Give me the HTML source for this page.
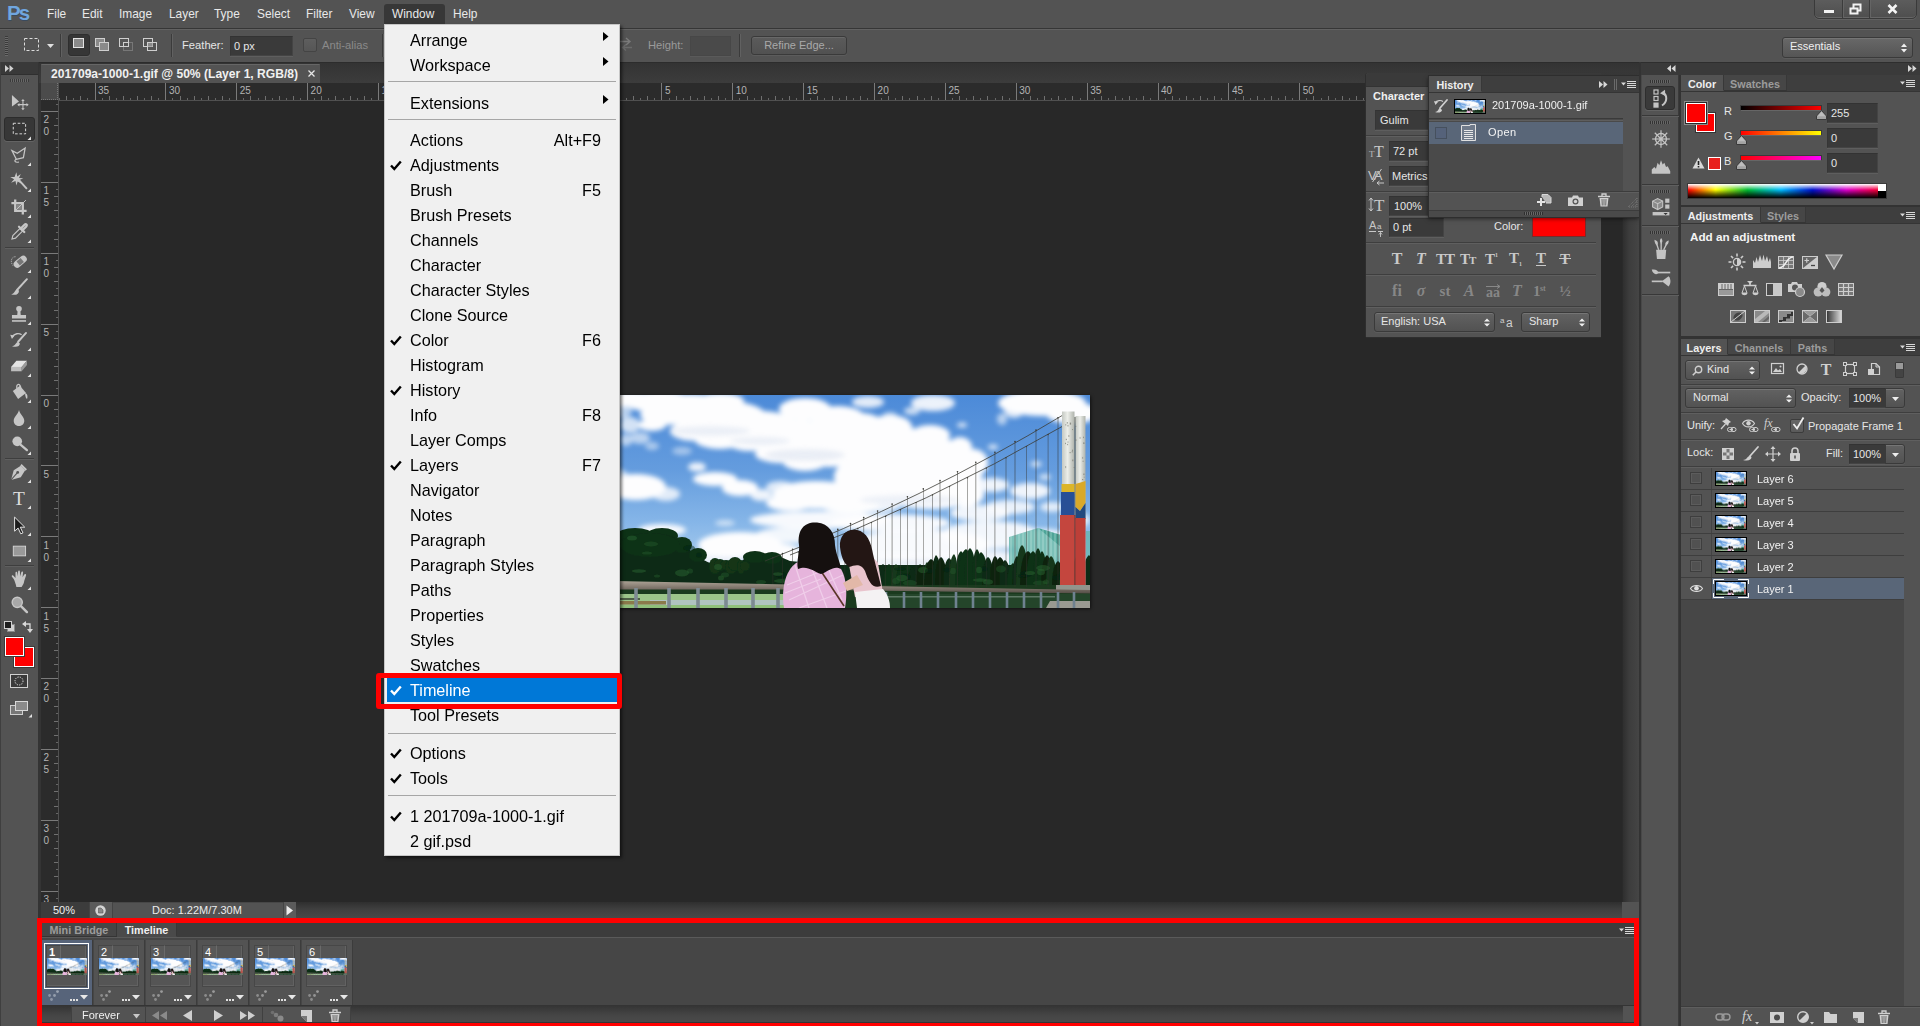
<!DOCTYPE html>
<html lang="en"><head><meta charset="utf-8"><title>Photoshop - Window menu Timeline</title>
<style>
*{box-sizing:border-box;margin:0;padding:0}
html,body{width:1920px;height:1026px;overflow:hidden;background:#535353}
body{font-family:"Liberation Sans",sans-serif;font-size:11px;color:#e6e6e6;position:relative;cursor:default}
.a{position:absolute}
.t{position:absolute;white-space:nowrap;line-height:14px}
.b{font-weight:bold}
.dim{color:#8e8e8e}
svg{position:absolute;overflow:visible}
#menubar{left:0;top:0;width:1920px;height:28px;background:#535353}
#optbar{left:0;top:28px;width:1920px;height:34px;background:#535353;border-top:1px solid #363636;box-shadow:inset 0 1px 0 #626262}
.mi{position:absolute;top:7px;font-size:11.9px;line-height:15px;color:#e9e9e9;white-space:nowrap}
.fld{position:absolute;background:#3a3a3a;border:1px solid #444;border-top-color:#333;border-left-color:#363636;box-shadow:0 1px 0 #5e5e5e}
.btn{position:absolute;border:1px solid #3a3a3a;border-radius:3px;background:linear-gradient(#626262,#525252);box-shadow:inset 0 1px 0 #757575,0 1px 0 #5c5c5c}
.tabstrip{position:absolute;background:#3e3e3e;border-bottom:1px solid #353535}
.tab{position:absolute;top:0;height:100%;font-weight:bold;font-size:10.8px;line-height:15px;padding-top:2px;text-align:center;color:#9c9c9c;background:#464646;border-right:1px solid #383838;border-bottom:1px solid #353535;white-space:nowrap}
.tab.on{color:#efefef;background:#535353;border-bottom:1px solid #535353;border-right:1px solid #383838}
.panel{position:absolute;background:#535353}
.dock svg{transform:scale(.84);transform-origin:50% 50%}
.dock svg.ns{transform:none}
.sepv{position:absolute;width:1px;background:#3b3b3b;box-shadow:1px 0 0 #616161}
.seph{position:absolute;height:1px;background:#3e3e3e;box-shadow:0 1px 0 #5f5f5f}
</style></head>
<body>
<svg class="a" width="0" height="0" style="left:0;top:0"><defs><linearGradient id="sky" x1="0" y1="0" x2="0" y2="1"><stop offset="0" stop-color="#4c8ad8"/><stop offset="0.35" stop-color="#649cde"/><stop offset="0.6" stop-color="#86b6e8"/><stop offset="0.85" stop-color="#b3d2f0"/><stop offset="1" stop-color="#cfe2f5"/></linearGradient><filter id="cb" x="-10%" y="-10%" width="120%" height="120%"><feGaussianBlur stdDeviation="2.6"/></filter><filter id="cb2" x="-10%" y="-10%" width="120%" height="120%"><feGaussianBlur stdDeviation="1.4"/></filter><filter id="tb" x="-5%" y="-5%" width="110%" height="110%"><feGaussianBlur stdDeviation="0.6"/></filter><linearGradient id="tw" x1="0" y1="0" x2="1" y2="0"><stop offset="0" stop-color="#c4c8c2"/><stop offset="0.45" stop-color="#eceee9"/><stop offset="1" stop-color="#aeb2ab"/></linearGradient><linearGradient id="rail" x1="0" y1="0" x2="0" y2="1"><stop offset="0" stop-color="#b0a699"/><stop offset="0.4" stop-color="#8d8378"/><stop offset="1" stop-color="#544d46"/></linearGradient><symbol id="photo" viewBox="0 0 500 213" preserveAspectRatio="none"><rect width="500" height="213" fill="url(#sky)"/><g filter="url(#cb)"><ellipse cx="40" cy="4" rx="25" ry="8" fill="#fdfdfe"/><ellipse cx="70" cy="7" rx="34" ry="11" fill="#fdfdfe"/><ellipse cx="100" cy="13" rx="42" ry="14" fill="#fdfdfe"/><ellipse cx="135" cy="22" rx="42" ry="16" fill="#fdfdfe"/><ellipse cx="130" cy="6" rx="24" ry="8" fill="#fdfdfe"/><ellipse cx="170" cy="32" rx="40" ry="16" fill="#fdfdfe"/><ellipse cx="205" cy="42" rx="38" ry="18" fill="#fdfdfe"/><ellipse cx="215" cy="14" rx="26" ry="11" fill="#fdfdfe"/><ellipse cx="248" cy="24" rx="28" ry="13" fill="#fdfdfe"/><ellipse cx="240" cy="50" rx="35" ry="22" fill="#fdfdfe"/><ellipse cx="272" cy="44" rx="30" ry="26" fill="#fdfdfe"/><ellipse cx="300" cy="56" rx="40" ry="28" fill="#fdfdfe"/><ellipse cx="330" cy="66" rx="42" ry="30" fill="#fdfdfe"/><ellipse cx="356" cy="82" rx="36" ry="26" fill="#fdfdfe"/><ellipse cx="312" cy="86" rx="50" ry="24" fill="#fdfdfe"/><ellipse cx="280" cy="82" rx="36" ry="22" fill="#fdfdfe"/><ellipse cx="374" cy="99" rx="20" ry="13" fill="#fdfdfe"/><ellipse cx="340" cy="101" rx="45" ry="13" fill="#fdfdfe"/><ellipse cx="300" cy="32" rx="22" ry="12" fill="#fdfdfe"/><ellipse cx="340" cy="40" rx="20" ry="10" fill="#fdfdfe"/><ellipse cx="105" cy="36" rx="25" ry="10" fill="#fdfdfe"/><ellipse cx="130" cy="45" rx="25" ry="9" fill="#fdfdfe"/><ellipse cx="160" cy="48" rx="22" ry="8" fill="#fdfdfe"/><ellipse cx="190" cy="59" rx="25" ry="9" fill="#fdfdfe"/><ellipse cx="215" cy="67" rx="22" ry="9" fill="#fdfdfe"/><ellipse cx="383" cy="68" rx="15" ry="14" fill="#fdfdfe"/><ellipse cx="370" cy="52" rx="12" ry="10" fill="#fdfdfe"/><ellipse cx="78" cy="20" rx="28" ry="10" fill="#fdfdfe"/><ellipse cx="62" cy="30" rx="14" ry="6" fill="#fdfdfe"/><ellipse cx="278" cy="7" rx="16" ry="6" fill="#fdfdfe" opacity="0.85"/><ellipse cx="343" cy="8" rx="22" ry="8" fill="#fdfdfe" opacity="0.9"/><ellipse cx="322" cy="16" rx="8" ry="4" fill="#fdfdfe" opacity="0.7"/><ellipse cx="300" cy="20" rx="7" ry="3" fill="#fdfdfe" opacity="0.6"/><ellipse cx="372" cy="30" rx="5" ry="2.5" fill="#fdfdfe" opacity="0.8"/><ellipse cx="403" cy="52" rx="5" ry="2.5" fill="#fdfdfe" opacity="0.8"/><ellipse cx="446" cy="69" rx="6" ry="3" fill="#fdfdfe" opacity="0.7"/><ellipse cx="455" cy="82" rx="6" ry="3" fill="#fdfdfe" opacity="0.7"/><ellipse cx="452" cy="8" rx="44" ry="13" fill="#fdfdfe"/><ellipse cx="482" cy="18" rx="26" ry="11" fill="#fdfdfe"/><ellipse cx="424" cy="15" rx="10" ry="8" fill="#fdfdfe" opacity="0.8"/><ellipse cx="412" cy="24" rx="5" ry="6" fill="#fdfdfe" opacity="0.6"/><ellipse cx="40" cy="30" rx="10" ry="8" fill="#fdfdfe" opacity="0.75"/><ellipse cx="33" cy="14" rx="9" ry="10" fill="#fdfdfe" opacity="0.6"/><ellipse cx="50" cy="43" rx="10" ry="6" fill="#fdfdfe" opacity="0.6"/><ellipse cx="36" cy="45" rx="6" ry="6" fill="#fdfdfe" opacity="0.6"/><ellipse cx="62" cy="51" rx="7" ry="4" fill="#fdfdfe" opacity="0.5"/><ellipse cx="92" cy="56" rx="10" ry="4" fill="#fdfdfe" opacity="0.45"/><ellipse cx="46" cy="92" rx="30" ry="13" fill="#fdfdfe"/><ellipse cx="26" cy="80" rx="12" ry="6" fill="#fdfdfe" opacity="0.6"/><ellipse cx="76" cy="99" rx="14" ry="7" fill="#fdfdfe" opacity="0.8"/><ellipse cx="107" cy="72" rx="9" ry="4.5" fill="#fdfdfe" opacity="0.9"/><ellipse cx="125" cy="84" rx="22" ry="7" fill="#fdfdfe"/><ellipse cx="150" cy="93" rx="18" ry="8" fill="#fdfdfe"/><ellipse cx="171" cy="100" rx="11" ry="6" fill="#fdfdfe" opacity="0.9"/><ellipse cx="226" cy="100" rx="44" ry="14" fill="#fdfdfe"/><ellipse cx="200" cy="108" rx="24" ry="8" fill="#fdfdfe"/><ellipse cx="262" cy="106" rx="30" ry="12" fill="#fdfdfe"/><ellipse cx="190" cy="92" rx="14" ry="6" fill="#fdfdfe" opacity="0.8"/><ellipse cx="402" cy="90" rx="17" ry="7" fill="#fdfdfe" opacity="0.9"/><ellipse cx="440" cy="96" rx="20" ry="8" fill="#fdfdfe" opacity="0.9"/><ellipse cx="462" cy="112" rx="12" ry="5" fill="#fdfdfe" opacity="0.8"/><ellipse cx="420" cy="112" rx="25" ry="7" fill="#fdfdfe" opacity="0.85"/><ellipse cx="390" cy="118" rx="30" ry="8" fill="#fdfdfe" opacity="0.9"/><ellipse cx="72" cy="135" rx="24" ry="6" fill="#fdfdfe" opacity="0.95"/><ellipse cx="60" cy="140" rx="14" ry="4" fill="#fdfdfe" opacity="0.8"/><ellipse cx="150" cy="150" rx="42" ry="13" fill="#fdfdfe"/><ellipse cx="185" cy="160" rx="30" ry="12" fill="#fdfdfe"/><ellipse cx="130" cy="162" rx="25" ry="8" fill="#fdfdfe" opacity="0.9"/><ellipse cx="230" cy="125" rx="70" ry="9" fill="#fdfdfe" opacity="0.95"/><ellipse cx="300" cy="128" rx="60" ry="9" fill="#fdfdfe" opacity="0.95"/><ellipse cx="270" cy="112" rx="40" ry="6" fill="#fdfdfe" opacity="0.9"/><ellipse cx="330" cy="150" rx="70" ry="16" fill="#fdfdfe" opacity="0.95"/><ellipse cx="400" cy="140" rx="50" ry="14" fill="#fdfdfe" opacity="0.9"/><ellipse cx="300" cy="170" rx="60" ry="10" fill="#fdfdfe" opacity="0.9"/><ellipse cx="390" cy="165" rx="50" ry="10" fill="#fdfdfe" opacity="0.85"/><ellipse cx="455" cy="150" rx="30" ry="16" fill="#fdfdfe" opacity="0.85"/><ellipse cx="485" cy="125" rx="15" ry="8" fill="#fdfdfe" opacity="0.8"/><ellipse cx="205" cy="140" rx="40" ry="8" fill="#fdfdfe" opacity="0.9"/><ellipse cx="135" cy="128" rx="10" ry="3" fill="#fdfdfe" opacity="0.6"/></g><g filter="url(#cb)" opacity="0.25"><ellipse cx="215" cy="60" rx="40" ry="6" fill="#b4c4de"/><ellipse cx="120" cy="36" rx="40" ry="5" fill="#b9c9e2"/><ellipse cx="320" cy="105" rx="50" ry="5" fill="#c0cfe6"/><ellipse cx="170" cy="46" rx="30" ry="4" fill="#b9c9e2"/><ellipse cx="150" cy="166" rx="40" ry="4" fill="#c5d3ea"/><ellipse cx="350" cy="168" rx="60" ry="4" fill="#c5d3ea"/></g><g filter="url(#tb)"><path d="M419 142 L448 133 L471 140 L471 172 L419 172 Z" fill="#5fb3a8" opacity="0.8"/><rect x="496" y="136" width="4" height="36" fill="#5fb3a8" opacity=".7"/><path d="M448 133 L471 152 L471 140 Z" fill="#2f9384" opacity=".6"/><line x1="421" y1="141" x2="421" y2="172" stroke="#c4e6e0" stroke-width="0.7" opacity=".8"/><line x1="425" y1="140" x2="425" y2="172" stroke="#c4e6e0" stroke-width="0.7" opacity=".8"/><line x1="429" y1="139" x2="429" y2="172" stroke="#c4e6e0" stroke-width="0.7" opacity=".8"/><line x1="433" y1="138" x2="433" y2="172" stroke="#c4e6e0" stroke-width="0.7" opacity=".8"/><line x1="437" y1="137" x2="437" y2="172" stroke="#c4e6e0" stroke-width="0.7" opacity=".8"/><line x1="441" y1="135" x2="441" y2="172" stroke="#c4e6e0" stroke-width="0.7" opacity=".8"/><line x1="445" y1="134" x2="445" y2="172" stroke="#c4e6e0" stroke-width="0.7" opacity=".8"/><line x1="449" y1="133" x2="449" y2="172" stroke="#c4e6e0" stroke-width="0.7" opacity=".8"/><line x1="453" y1="134" x2="453" y2="172" stroke="#c4e6e0" stroke-width="0.7" opacity=".8"/><line x1="457" y1="136" x2="457" y2="172" stroke="#c4e6e0" stroke-width="0.7" opacity=".8"/><line x1="461" y1="137" x2="461" y2="172" stroke="#c4e6e0" stroke-width="0.7" opacity=".8"/><line x1="465" y1="138" x2="465" y2="172" stroke="#c4e6e0" stroke-width="0.7" opacity=".8"/><line x1="469" y1="139" x2="469" y2="172" stroke="#c4e6e0" stroke-width="0.7" opacity=".8"/></g><g filter="url(#tb)"><path d="M0 150 C8 141 22 136 42 137 C60 134 84 141 96 152 C106 160 112 165 120 168 L150 168 C158 158 175 157 186 160 L200 166 L240 170 L500 170 L500 200 L0 200 Z" fill="#0e2c14"/><ellipse cx="20" cy="146" rx="16" ry="9" fill="#103016"/><ellipse cx="45" cy="140" rx="18" ry="7" fill="#103016"/><ellipse cx="72" cy="141" rx="16" ry="8" fill="#103016"/><ellipse cx="92" cy="150" rx="10" ry="8" fill="#103016"/><ellipse cx="108" cy="160" rx="9" ry="7" fill="#103016"/><ellipse cx="60" cy="150" rx="30" ry="12" fill="#103016"/><ellipse cx="165" cy="162" rx="12" ry="6" fill="#103016"/><ellipse cx="182" cy="163" rx="10" ry="6" fill="#103016"/><ellipse cx="125" cy="171" rx="6" ry="8" fill="#123418"/><ellipse cx="130" cy="170" rx="6" ry="6" fill="#123418"/><ellipse cx="136" cy="170" rx="6" ry="5" fill="#123418"/><ellipse cx="141" cy="172" rx="6" ry="7" fill="#123418"/><ellipse cx="145" cy="169" rx="7" ry="7" fill="#123418"/><ellipse cx="151" cy="172" rx="4" ry="7" fill="#123418"/><ellipse cx="155" cy="171" rx="5" ry="5" fill="#123418"/><path d="M279 192 Q279 174 286 170 Q293 174 293 192 Z" fill="#0a2410"/><path d="M286 192 Q286 173 293 169 Q299 173 299 192 Z" fill="#0c2912"/><path d="M293 192 Q293 173 299 169 Q305 173 305 192 Z" fill="#0f3015"/><path d="M301 192 Q301 173 306 169 Q311 173 311 192 Z" fill="#14381a"/><path d="M306 192 Q306 174 310 170 Q315 174 315 192 Z" fill="#0f3015"/><path d="M310 192 Q310 174 318 170 Q325 174 325 192 Z" fill="#0f3015"/><path d="M318 192 Q318 175 322 171 Q327 175 327 192 Z" fill="#0c2912"/><path d="M326 192 Q326 173 330 169 Q335 173 335 192 Z" fill="#0a2410"/><path d="M333 192 Q333 171 337 167 Q342 171 342 192 Z" fill="#14381a"/><path d="M334 192 Q334 168 341 164 Q349 168 349 192 Z" fill="#0a2410"/><path d="M342 192 Q342 164 346 160 Q351 164 351 192 Z" fill="#0c2912"/><path d="M345 192 Q345 166 351 162 Q357 166 357 192 Z" fill="#0a2410"/><path d="M353 192 Q353 167 359 163 Q365 167 365 192 Z" fill="#0c2912"/><path d="M359 192 Q359 163 364 159 Q368 163 368 192 Z" fill="#14381a"/><path d="M365 192 Q365 160 371 156 Q377 160 377 192 Z" fill="#0f3015"/><path d="M368 192 Q368 158 376 154 Q383 158 383 192 Z" fill="#0f3015"/><path d="M374 192 Q374 157 380 153 Q386 157 386 192 Z" fill="#0f3015"/><path d="M382 192 Q382 158 387 154 Q392 158 392 192 Z" fill="#0f3015"/><path d="M385 192 Q385 161 391 157 Q398 161 398 192 Z" fill="#0f3015"/><path d="M392 192 Q392 166 398 162 Q404 166 404 192 Z" fill="#0c2912"/><path d="M400 192 Q400 165 405 161 Q411 165 411 192 Z" fill="#0a2410"/><path d="M404 192 Q404 166 410 162 Q417 166 417 192 Z" fill="#0a2410"/><path d="M409 192 Q409 169 415 165 Q421 169 421 192 Z" fill="#0c2912"/><path d="M417 192 Q417 172 423 168 Q428 172 428 192 Z" fill="#0f3015"/><path d="M422 192 Q422 165 427 161 Q432 165 432 192 Z" fill="#0c2912"/><path d="M426 192 Q426 154 432 150 Q438 154 438 192 Z" fill="#14381a"/><path d="M430 192 Q430 160 438 156 Q446 160 446 192 Z" fill="#0a2410"/><path d="M436 192 Q436 160 443 156 Q450 160 450 192 Z" fill="#0f3015"/><path d="M443 192 Q443 157 448 153 Q453 157 453 192 Z" fill="#0f3015"/><path d="M447 192 Q447 160 452 156 Q457 160 457 192 Z" fill="#0f3015"/><path d="M451 192 Q451 164 457 160 Q463 164 463 192 Z" fill="#0a2410"/><path d="M456 192 Q456 165 461 161 Q467 165 467 192 Z" fill="#14381a"/><path d="M462 192 Q462 170 468 166 Q474 170 474 192 Z" fill="#0a2410"/><path d="M469 192 Q469 169 474 165 Q480 169 480 192 Z" fill="#14381a"/><path d="M477 192 Q477 167 481 163 Q485 167 485 192 Z" fill="#0f3015"/><path d="M482 192 Q482 165 487 161 Q492 165 492 192 Z" fill="#0f3015"/><path d="M485 192 Q485 164 492 160 Q498 164 498 192 Z" fill="#0a2410"/><path d="M493 192 Q493 164 499 160 Q504 164 504 192 Z" fill="#0c2912"/></g><g filter="url(#tb)"><ellipse cx="436" cy="179" rx="6" ry="3.2" fill="#0a2410" opacity=".5"/><ellipse cx="7" cy="158" rx="3" ry="1.6" fill="#2a6330" opacity=".5"/><ellipse cx="320" cy="188" rx="7" ry="3.0" fill="#24582a" opacity=".5"/><ellipse cx="467" cy="183" rx="5" ry="2.4" fill="#0a2410" opacity=".5"/><ellipse cx="42" cy="143" rx="5" ry="2.5" fill="#2a6330" opacity=".5"/><ellipse cx="479" cy="174" rx="6" ry="2.8" fill="#24582a" opacity=".5"/><ellipse cx="128" cy="172" rx="4" ry="2.9" fill="#2a6330" opacity=".5"/><ellipse cx="171" cy="187" rx="5" ry="2.0" fill="#24582a" opacity=".5"/><ellipse cx="333" cy="175" rx="5" ry="3.1" fill="#2a6330" opacity=".5"/><ellipse cx="440" cy="178" rx="5" ry="2.1" fill="#2a6330" opacity=".5"/><ellipse cx="67" cy="181" rx="3" ry="1.6" fill="#24582a" opacity=".5"/><ellipse cx="411" cy="174" rx="5" ry="3.4" fill="#24582a" opacity=".5"/><ellipse cx="191" cy="180" rx="6" ry="2.9" fill="#0a2410" opacity=".5"/><ellipse cx="226" cy="173" rx="3" ry="3.2" fill="#2a6330" opacity=".5"/><ellipse cx="339" cy="176" rx="4" ry="2.8" fill="#0a2410" opacity=".5"/><ellipse cx="10" cy="162" rx="3" ry="3.2" fill="#2a6330" opacity=".5"/><ellipse cx="390" cy="185" rx="7" ry="1.7" fill="#2a6330" opacity=".5"/><ellipse cx="315" cy="182" rx="6" ry="3.4" fill="#0a2410" opacity=".5"/><ellipse cx="99" cy="153" rx="6" ry="3.0" fill="#0a2410" opacity=".5"/><ellipse cx="357" cy="175" rx="4" ry="2.2" fill="#0a2410" opacity=".5"/><ellipse cx="473" cy="180" rx="7" ry="1.8" fill="#0a2410" opacity=".5"/><ellipse cx="453" cy="173" rx="7" ry="2.9" fill="#2a6330" opacity=".5"/><ellipse cx="225" cy="175" rx="7" ry="1.5" fill="#0a2410" opacity=".5"/><ellipse cx="398" cy="187" rx="5" ry="2.8" fill="#2a6330" opacity=".5"/><ellipse cx="49" cy="176" rx="7" ry="1.7" fill="#2a6330" opacity=".5"/><ellipse cx="450" cy="188" rx="7" ry="2.6" fill="#24582a" opacity=".5"/><ellipse cx="131" cy="183" rx="3" ry="2.5" fill="#2a6330" opacity=".5"/><ellipse cx="220" cy="181" rx="6" ry="2.5" fill="#2a6330" opacity=".5"/><ellipse cx="109" cy="160" rx="3" ry="2.6" fill="#0a2410" opacity=".5"/><ellipse cx="394" cy="174" rx="4" ry="2.5" fill="#0a2410" opacity=".5"/><ellipse cx="220" cy="186" rx="5" ry="2.9" fill="#2a6330" opacity=".5"/><ellipse cx="220" cy="181" rx="6" ry="2.6" fill="#2a6330" opacity=".5"/><ellipse cx="191" cy="186" rx="7" ry="1.9" fill="#2a6330" opacity=".5"/><ellipse cx="484" cy="180" rx="5" ry="1.9" fill="#0a2410" opacity=".5"/><ellipse cx="57" cy="158" rx="5" ry="1.6" fill="#24582a" opacity=".5"/><ellipse cx="61" cy="149" rx="7" ry="2.4" fill="#24582a" opacity=".5"/><ellipse cx="135" cy="180" rx="4" ry="2.4" fill="#24582a" opacity=".5"/><ellipse cx="210" cy="172" rx="4" ry="2.9" fill="#2a6330" opacity=".5"/><ellipse cx="18" cy="143" rx="4" ry="2.9" fill="#2a6330" opacity=".5"/><ellipse cx="310" cy="174" rx="6" ry="1.7" fill="#0a2410" opacity=".5"/><ellipse cx="312" cy="183" rx="6" ry="3.3" fill="#2a6330" opacity=".5"/><ellipse cx="188" cy="179" rx="5" ry="1.8" fill="#2a6330" opacity=".5"/><ellipse cx="432" cy="181" rx="4" ry="1.9" fill="#0a2410" opacity=".5"/><ellipse cx="306" cy="186" rx="4" ry="3.0" fill="#24582a" opacity=".5"/><ellipse cx="451" cy="177" rx="4" ry="3.3" fill="#2a6330" opacity=".5"/><ellipse cx="389" cy="175" rx="3" ry="3.3" fill="#2a6330" opacity=".5"/><ellipse cx="363" cy="176" rx="3" ry="3.2" fill="#24582a" opacity=".5"/><ellipse cx="100" cy="176" rx="3" ry="2.6" fill="#24582a" opacity=".5"/><ellipse cx="456" cy="187" rx="3" ry="2.5" fill="#24582a" opacity=".5"/><ellipse cx="251" cy="183" rx="4" ry="1.6" fill="#2a6330" opacity=".5"/><ellipse cx="12" cy="168" rx="7" ry="2.5" fill="#2a6330" opacity=".5"/><ellipse cx="92" cy="178" rx="7" ry="3.4" fill="#2a6330" opacity=".5"/></g><rect x="0" y="190" width="500" height="23" fill="#1a3a1e"/><rect x="0" y="199" width="205" height="14" fill="#9cc58a"/><rect x="60" y="205" width="145" height="6" fill="#b0c3c0"/><rect x="0" y="210" width="205" height="3" fill="#8fbf7a"/><rect x="0" y="206" width="76" height="3.5" fill="#8a7a4a"/><rect x="0" y="203" width="50" height="2" fill="#4d5f45"/><rect x="290" y="199" width="210" height="14" fill="#24452a"/><rect x="295" y="201" width="170" height="1.5" fill="#5f7a66"/><path d="M456 213 L460 206 L500 206 L500 213 Z" fill="#9a9a92"/><path d="M175 166 Q334 104 473 20" stroke="#3c3c36" stroke-width="0.8" fill="none"/><path d="M200 160 Q336 110 473 31" stroke="#3c3c36" stroke-width="0.8" fill="none"/><line x1="468.0" y1="22.8" x2="468.0" y2="192" stroke="#33332e" stroke-width="0.6" opacity=".85"/><circle cx="468.0" cy="22.8" r=".8" fill="#3c3c36"/><line x1="458.1" y1="39.5" x2="458.1" y2="192" stroke="#33332e" stroke-width="0.55" opacity=".8"/><circle cx="458.1" cy="39.5" r=".7" fill="#3c3c36"/><line x1="446.0" y1="35.0" x2="446.0" y2="192" stroke="#33332e" stroke-width="0.6" opacity=".85"/><circle cx="446.0" cy="35.0" r=".8" fill="#3c3c36"/><line x1="436.5" y1="51.6" x2="436.5" y2="192" stroke="#33332e" stroke-width="0.55" opacity=".8"/><circle cx="436.5" cy="51.6" r=".7" fill="#3c3c36"/><line x1="425.0" y1="46.5" x2="425.0" y2="192" stroke="#33332e" stroke-width="0.6" opacity=".85"/><circle cx="425.0" cy="46.5" r=".8" fill="#3c3c36"/><line x1="416.0" y1="62.7" x2="416.0" y2="192" stroke="#33332e" stroke-width="0.55" opacity=".8"/><circle cx="416.0" cy="62.7" r=".7" fill="#3c3c36"/><line x1="404.9" y1="57.2" x2="404.9" y2="192" stroke="#33332e" stroke-width="0.6" opacity=".85"/><circle cx="404.9" cy="57.2" r=".8" fill="#3c3c36"/><line x1="396.3" y1="73.1" x2="396.3" y2="192" stroke="#33332e" stroke-width="0.55" opacity=".8"/><circle cx="396.3" cy="73.1" r=".7" fill="#3c3c36"/><line x1="385.8" y1="67.3" x2="385.8" y2="192" stroke="#33332e" stroke-width="0.6" opacity=".85"/><circle cx="385.8" cy="67.3" r=".8" fill="#3c3c36"/><line x1="377.5" y1="82.7" x2="377.5" y2="192" stroke="#33332e" stroke-width="0.55" opacity=".8"/><circle cx="377.5" cy="82.7" r=".7" fill="#3c3c36"/><line x1="367.5" y1="76.7" x2="367.5" y2="192" stroke="#33332e" stroke-width="0.6" opacity=".85"/><circle cx="367.5" cy="76.7" r=".8" fill="#3c3c36"/><line x1="359.6" y1="91.6" x2="359.6" y2="192" stroke="#33332e" stroke-width="0.55" opacity=".8"/><circle cx="359.6" cy="91.6" r=".7" fill="#3c3c36"/><line x1="350.0" y1="85.6" x2="350.0" y2="192" stroke="#33332e" stroke-width="0.6" opacity=".85"/><circle cx="350.0" cy="85.6" r=".8" fill="#3c3c36"/><line x1="342.5" y1="99.9" x2="342.5" y2="192" stroke="#33332e" stroke-width="0.55" opacity=".8"/><circle cx="342.5" cy="99.9" r=".7" fill="#3c3c36"/><line x1="333.3" y1="93.9" x2="333.3" y2="192" stroke="#33332e" stroke-width="0.6" opacity=".85"/><circle cx="333.3" cy="93.9" r=".8" fill="#3c3c36"/><line x1="326.1" y1="107.6" x2="326.1" y2="192" stroke="#33332e" stroke-width="0.55" opacity=".8"/><circle cx="326.1" cy="107.6" r=".7" fill="#3c3c36"/><line x1="317.4" y1="101.7" x2="317.4" y2="192" stroke="#33332e" stroke-width="0.6" opacity=".85"/><circle cx="317.4" cy="101.7" r=".8" fill="#3c3c36"/><line x1="310.5" y1="114.8" x2="310.5" y2="192" stroke="#33332e" stroke-width="0.55" opacity=".8"/><circle cx="310.5" cy="114.8" r=".7" fill="#3c3c36"/><line x1="302.1" y1="109.1" x2="302.1" y2="192" stroke="#33332e" stroke-width="0.6" opacity=".85"/><circle cx="302.1" cy="109.1" r=".8" fill="#3c3c36"/><line x1="295.6" y1="121.4" x2="295.6" y2="192" stroke="#33332e" stroke-width="0.55" opacity=".8"/><circle cx="295.6" cy="121.4" r=".7" fill="#3c3c36"/><line x1="287.6" y1="116.0" x2="287.6" y2="192" stroke="#33332e" stroke-width="0.6" opacity=".85"/><circle cx="287.6" cy="116.0" r=".8" fill="#3c3c36"/><line x1="281.4" y1="127.6" x2="281.4" y2="192" stroke="#33332e" stroke-width="0.55" opacity=".8"/><circle cx="281.4" cy="127.6" r=".7" fill="#3c3c36"/><line x1="273.7" y1="122.5" x2="273.7" y2="192" stroke="#33332e" stroke-width="0.6" opacity=".85"/><circle cx="273.7" cy="122.5" r=".8" fill="#3c3c36"/><line x1="267.8" y1="133.4" x2="267.8" y2="192" stroke="#33332e" stroke-width="0.55" opacity=".8"/><circle cx="267.8" cy="133.4" r=".7" fill="#3c3c36"/><line x1="260.5" y1="128.6" x2="260.5" y2="192" stroke="#33332e" stroke-width="0.6" opacity=".85"/><circle cx="260.5" cy="128.6" r=".8" fill="#3c3c36"/><line x1="254.8" y1="138.8" x2="254.8" y2="192" stroke="#33332e" stroke-width="0.55" opacity=".8"/><circle cx="254.8" cy="138.8" r=".7" fill="#3c3c36"/><line x1="247.8" y1="134.4" x2="247.8" y2="192" stroke="#33332e" stroke-width="0.6" opacity=".85"/><circle cx="247.8" cy="134.4" r=".8" fill="#3c3c36"/><line x1="242.4" y1="143.8" x2="242.4" y2="192" stroke="#33332e" stroke-width="0.55" opacity=".8"/><circle cx="242.4" cy="143.8" r=".7" fill="#3c3c36"/><line x1="235.7" y1="139.8" x2="235.7" y2="192" stroke="#33332e" stroke-width="0.6" opacity=".85"/><circle cx="235.7" cy="139.8" r=".8" fill="#3c3c36"/><line x1="230.5" y1="148.5" x2="230.5" y2="192" stroke="#33332e" stroke-width="0.55" opacity=".8"/><circle cx="230.5" cy="148.5" r=".7" fill="#3c3c36"/><line x1="224.2" y1="144.9" x2="224.2" y2="192" stroke="#33332e" stroke-width="0.6" opacity=".85"/><circle cx="224.2" cy="144.9" r=".8" fill="#3c3c36"/><line x1="219.2" y1="152.8" x2="219.2" y2="192" stroke="#33332e" stroke-width="0.55" opacity=".8"/><circle cx="219.2" cy="152.8" r=".7" fill="#3c3c36"/><line x1="213.1" y1="149.8" x2="213.1" y2="192" stroke="#33332e" stroke-width="0.6" opacity=".85"/><circle cx="213.1" cy="149.8" r=".8" fill="#3c3c36"/><line x1="208.4" y1="156.9" x2="208.4" y2="192" stroke="#33332e" stroke-width="0.55" opacity=".8"/><circle cx="208.4" cy="156.9" r=".7" fill="#3c3c36"/><line x1="202.6" y1="154.3" x2="202.6" y2="192" stroke="#33332e" stroke-width="0.6" opacity=".85"/><circle cx="202.6" cy="154.3" r=".8" fill="#3c3c36"/><line x1="192.5" y1="158.6" x2="192.5" y2="192" stroke="#33332e" stroke-width="0.6" opacity=".85"/><circle cx="192.5" cy="158.6" r=".8" fill="#3c3c36"/><line x1="182.9" y1="162.7" x2="182.9" y2="192" stroke="#33332e" stroke-width="0.6" opacity=".85"/><circle cx="182.9" cy="162.7" r=".8" fill="#3c3c36"/><rect x="472" y="16.5" width="12.5" height="174" fill="url(#tw)"/><rect x="485.5" y="21" width="10" height="170" fill="url(#tw)"/><rect x="484.4" y="22" width="1.2" height="168" fill="#6c6f68"/><rect x="485.2" y="30.9" width="1.1" height="0.9" fill="#6d6f66" opacity=".7"/><rect x="475.0" y="47.8" width="0.9" height="1.3" fill="#6d6f66" opacity=".7"/><rect x="477.4" y="46.6" width="1.1" height="0.9" fill="#6d6f66" opacity=".7"/><rect x="477.2" y="48.9" width="0.9" height="1.3" fill="#6d6f66" opacity=".7"/><rect x="492.4" y="61.9" width="0.7" height="1.9" fill="#6d6f66" opacity=".7"/><rect x="479.8" y="27.6" width="1.3" height="2.0" fill="#6d6f66" opacity=".7"/><rect x="492.1" y="84.0" width="1.1" height="1.1" fill="#6d6f66" opacity=".7"/><rect x="485.3" y="44.5" width="1.2" height="1.2" fill="#6d6f66" opacity=".7"/><rect x="475.4" y="71.0" width="0.7" height="2.1" fill="#6d6f66" opacity=".7"/><rect x="475.8" y="43.8" width="1.0" height="1.3" fill="#6d6f66" opacity=".7"/><rect x="482.1" y="34.0" width="0.8" height="1.1" fill="#6d6f66" opacity=".7"/><rect x="489.7" y="41.9" width="0.7" height="2.0" fill="#6d6f66" opacity=".7"/><rect x="493.8" y="81.6" width="0.6" height="1.2" fill="#6d6f66" opacity=".7"/><rect x="493.2" y="41.7" width="0.8" height="1.4" fill="#6d6f66" opacity=".7"/><rect x="476.8" y="27.1" width="1.0" height="1.5" fill="#6d6f66" opacity=".7"/><rect x="477.5" y="29.9" width="0.9" height="1.6" fill="#6d6f66" opacity=".7"/><rect x="475.4" y="29.1" width="0.8" height="1.4" fill="#6d6f66" opacity=".7"/><rect x="483.6" y="72.2" width="1.1" height="0.8" fill="#6d6f66" opacity=".7"/><rect x="478.4" y="40.2" width="0.9" height="1.6" fill="#6d6f66" opacity=".7"/><rect x="481.7" y="56.4" width="1.3" height="0.9" fill="#6d6f66" opacity=".7"/><rect x="482.3" y="64.5" width="1.0" height="1.7" fill="#6d6f66" opacity=".7"/><rect x="493.1" y="47.5" width="1.4" height="1.3" fill="#6d6f66" opacity=".7"/><rect x="493.4" y="78.5" width="1.0" height="1.6" fill="#6d6f66" opacity=".7"/><rect x="482.0" y="54.6" width="0.8" height="1.4" fill="#6d6f66" opacity=".7"/><rect x="479.6" y="57.0" width="1.0" height="1.2" fill="#6d6f66" opacity=".7"/><rect x="492.5" y="65.8" width="1.2" height="0.8" fill="#6d6f66" opacity=".7"/><path d="M471.5 89 L484.5 89 L484.5 99 L471.5 97 Z" fill="#dcb528"/><path d="M485.5 89 L495.5 86 L495.5 108 L490 116 L485.5 112 Z" fill="#d9a92a"/><rect x="471" y="97" width="13.5" height="24" fill="#274f96"/><path d="M485.5 112 L490 116 L495.5 108 L495.5 124 L485.5 124 Z" fill="#22497f"/><rect x="470" y="120" width="14.5" height="71" fill="#c4463e"/><rect x="485.2" y="123" width="10.3" height="68" fill="#bd3f38"/><rect x="484.4" y="120" width="1" height="70" fill="#7a2a26"/><rect x="466" y="190" width="34" height="5" fill="#92948c"/><path d="M0 185.5 L200 189.5 L500 195 L500 198.5 L200 194.5 L0 194.5 Z" fill="url(#rail)"/><rect x="44.2" y="193" width="3.6" height="20" fill="#7d8a92"/><rect x="77.2" y="193" width="3.6" height="20" fill="#7d8a92"/><rect x="106.2" y="193" width="3.6" height="20" fill="#7d8a92"/><rect x="134.2" y="193" width="3.6" height="20" fill="#7d8a92"/><rect x="161.2" y="193" width="3.6" height="20" fill="#7d8a92"/><rect x="186.2" y="193" width="3.6" height="20" fill="#7d8a92"/><rect x="294.7" y="197" width="2.6" height="16" fill="#6f8290"/><rect x="312.7" y="197" width="2.6" height="16" fill="#6f8290"/><rect x="329.7" y="197" width="2.6" height="16" fill="#6f8290"/><rect x="346.7" y="197" width="2.6" height="16" fill="#6f8290"/><rect x="364.7" y="197" width="2.6" height="16" fill="#6f8290"/><rect x="381.7" y="197" width="2.6" height="16" fill="#6f8290"/><rect x="398.7" y="197" width="2.6" height="16" fill="#6f8290"/><rect x="415.7" y="197" width="2.6" height="16" fill="#6f8290"/><rect x="432.7" y="197" width="2.6" height="16" fill="#6f8290"/><rect x="449.7" y="197" width="2.6" height="16" fill="#6f8290"/><rect x="466.7" y="197" width="2.6" height="16" fill="#6f8290"/><rect x="482.7" y="197" width="2.6" height="16" fill="#6f8290"/><g transform="translate(31 0)"><path d="M163 213 C160 195 164 176 175 168 C185 162 206 162 215 168 C225 176 227 195 224 213 Z" fill="#e6b4dc"/><path d="M168 205 L222 180 M166 190 L216 170 M178 213 L225 196 M174 170 L188 213 M188 166 L206 213 M204 166 L221 205 M164 198 L200 184" stroke="#f3d6ee" stroke-width="1.3" fill="none" opacity=".75"/><path d="M196 170 L223 211" stroke="#5a3528" stroke-width="1.6"/><path d="M178 150 C176 134 184 126.5 196 127.5 C208 128.5 214 138 214 150 C215 160 219 166 220 174 C213 170 208 176 200 179 C192 176 186 170 177 174 C175 166 179 158 178 150 Z" fill="#15100f"/><path d="M228 170 C234 158 250 158 257 168 L262 198 L234 202 Z" fill="#e9c4cd"/><path d="M234 197 L262 194 C267 200 269 206 269 213 L236 213 Z" fill="#f4f2f3"/><path d="M222 188 L236 180 L242 190 L226 196 Z" fill="#e2b8a8"/><path d="M219 152 C218 140 226 133 236 135 C246 137 250 147 252 159 C255 172 258 182 260 191 C252 194 248 188 244 176 C240 168 234 170 228 172 C222 168 220 160 219 152 Z" fill="#231614"/></g></symbol></defs></svg>
<div id="menubar" class="a"><div class="t b" style="left:7px;top:1px;font-size:20.5px;line-height:23px;color:#70a6de;letter-spacing:-1.9px;text-shadow:0 1px 0 #3a4a5e">Ps</div><div class="a" style="left:384px;top:4px;width:61px;height:20px;background:#373737;border-radius:3px 3px 0 0"></div><div class="mi" style="left:47px">File</div><div class="mi" style="left:82px">Edit</div><div class="mi" style="left:119px">Image</div><div class="mi" style="left:169px">Layer</div><div class="mi" style="left:214px">Type</div><div class="mi" style="left:257px">Select</div><div class="mi" style="left:306px">Filter</div><div class="mi" style="left:349px">View</div><div class="mi" style="left:392px">Window</div><div class="mi" style="left:453px">Help</div><div class="a" style="left:1814px;top:-3px;width:103px;height:22px;border:1px solid #3a3a3a;border-radius:0 0 5px 5px;background:linear-gradient(#5e5e5e,#4e4e4e);box-shadow:inset 0 -1px 0 #666,0 1px 0 #616161"></div><div class="a" style="left:1842px;top:0;width:1px;height:18px;background:#3c3c3c;box-shadow:1px 0 0 #646464"></div><div class="a" style="left:1869px;top:0;width:1px;height:18px;background:#3c3c3c;box-shadow:1px 0 0 #646464"></div><div class="a" style="left:1824px;top:10px;width:10px;height:3px;background:#f2f2f2"></div><svg style="left:1849px;top:3px" width="14" height="12"><rect x="4.5" y="1.5" width="7" height="6" fill="none" stroke="#f2f2f2" stroke-width="2"/><rect x="1.5" y="5.5" width="7" height="5" fill="#555" stroke="#f2f2f2" stroke-width="2"/></svg><svg style="left:1887px;top:4px" width="12" height="10"><path d="M1.5 1 L9.5 9 M9.5 1 L1.5 9" stroke="#f5f5f5" stroke-width="2.6"/></svg></div><div id="optbar" class="a"><div class="a" style="left:5px;top:7px;width:3px;height:20px;background:repeating-linear-gradient(#3a3a3a 0 1px,#6a6a6a 1px 2px)"></div><svg style="left:24px;top:9px" width="15" height="13"><rect x="0.5" y="0.5" width="14" height="12" fill="none" stroke="#dcdcdc" stroke-width="1" stroke-dasharray="3 2"/></svg><svg style="left:47px;top:15px" width="7" height="4"><path d="M0 0 L7 0 L3.5 4 Z" fill="#e0e0e0"/></svg><div class="sepv" style="left:60px;top:5px;height:23px"></div><div class="a" style="left:68px;top:5px;width:22px;height:22px;background:#363636;border-radius:3px;border:1px solid #2e2e2e;box-shadow:0 1px 0 #626262"></div><svg style="left:73px;top:9px" width="12" height="11"><rect x="0.5" y="0.5" width="10" height="9" fill="#8a8a8a" stroke="#e3e3e3"/></svg><svg style="left:95px;top:9px" width="15" height="14"><rect x="0.5" y="0.5" width="9" height="8" fill="#8a8a8a" stroke="#cfcfcf"/><rect x="4.5" y="4.5" width="9" height="8" fill="#8a8a8a" stroke="#cfcfcf"/></svg><svg style="left:119px;top:9px" width="15" height="14"><rect x="4.5" y="4.5" width="9" height="8" fill="#555" stroke="#777"/><rect x="0.5" y="0.5" width="9" height="8" fill="#555" stroke="#cfcfcf"/><rect x="4.5" y="4.5" width="5" height="4" fill="#535353" stroke="#cfcfcf"/></svg><svg style="left:143px;top:9px" width="15" height="14"><rect x="0.5" y="0.5" width="9" height="8" fill="none" stroke="#cfcfcf"/><rect x="4.5" y="4.5" width="9" height="8" fill="none" stroke="#cfcfcf"/><rect x="5" y="5" width="4.5" height="3.5" fill="#8a8a8a"/></svg><div class="sepv" style="left:171px;top:5px;height:23px"></div><div class="t" style="left:182px;top:8.5px;font-size:11.2px">Feather:</div><div class="fld" style="left:230px;top:7px;width:63px;height:20px"><div class="t" style="left:3px;top:1.5px;font-size:11px">0 px</div></div><div class="a" style="left:303px;top:9px;width:14px;height:14px;border:1px solid #444;border-radius:2px;background:linear-gradient(#5e5e5e,#565656)"></div><div class="t dim" style="left:322px;top:8.5px;font-size:11.2px;color:#8a8a8a">Anti-alias</div><div class="sepv" style="left:382px;top:5px;height:23px"></div><div class="t" style="left:392px;top:8.5px;font-size:11.2px">Style:</div><div class="btn" style="left:425px;top:7px;width:96px;height:20px"><div class="t" style="left:7px;top:1px">Normal</div><svg style="left:84px;top:5px" width="6" height="9"><path d="M0 3.5 L3 0.5 L6 3.5 Z M0 5.5 L3 8.5 L6 5.5 Z" fill="#f0f0f0"/></svg></div><div class="t" style="left:532px;top:8.5px;font-size:11.2px;color:#9a9a9a">Width:</div><div class="fld" style="left:570px;top:7px;width:41px;height:20px;background:#4a4a4a;border-color:#474747;box-shadow:0 1px 0 #5a5a5a"></div><svg style="left:620px;top:8px" width="14" height="14"><path d="M0 4.5 L9 4.5 M6 1 L10 4.5 L6 8" stroke="#7a7a7a" fill="none" stroke-width="1.4"/><path d="M12 10.5 L3 10.5 M6 7.5 L2.5 10.5 L6 13.5" stroke="#6a6a6a" fill="none" stroke-width="1.4"/></svg><div class="t" style="left:648px;top:8.5px;font-size:11.2px;color:#9a9a9a">Height:</div><div class="fld" style="left:690px;top:7px;width:41px;height:20px;background:#4a4a4a;border-color:#474747;box-shadow:0 1px 0 #5a5a5a"></div><div class="sepv" style="left:739px;top:5px;height:23px"></div><div class="btn" style="left:751px;top:7px;width:96px;height:19px;background:linear-gradient(#5b5b5b,#515151);box-shadow:inset 0 1px 0 #686868,0 1px 0 #5c5c5c"><div class="t" style="left:0;width:94px;text-align:center;top:0.5px;font-size:11px;color:#a9a9a9">Refine Edge...</div></div><div class="btn" style="left:1782px;top:8px;width:131px;height:21px;background:linear-gradient(#686868,#555)"><div class="t" style="left:7px;top:1px;font-size:11px;color:#f0f0f0">Essentials</div><svg style="left:118px;top:5px" width="6" height="10"><path d="M0 4 L3 0.5 L6 4 Z M0 6 L3 9.5 L6 6 Z" fill="#f0f0f0"/></svg></div></div>
<div class="panel" style="left:0;top:62px;width:39px;height:964px;border-left:1px solid #3f3f3f;border-right:1px solid #333"><div class="a" style="left:0;top:0;width:37px;height:13px;background:#393939;border-bottom:1px solid #2f2f2f"></div><svg style="left:4px;top:3px" width="9" height="7"><path d="M0 0 L4 3.5 L0 7 Z M4.5 0 L8.5 3.5 L4.5 7 Z" fill="#d0d0d0"/></svg><div class="a" style="left:9px;top:17px;width:19px;height:3px;background:repeating-linear-gradient(90deg,#3a3a3a 0 1px,#686868 1px 2px)"></div><div class="a" style="left:3px;top:55px;width:31px;height:24px;background:#373737;border:1px solid #2c2c2c;border-radius:3px;box-shadow:0 1px 0 #636363"></div><svg style="left:6px;top:28px" width="24" height="24"><g transform="translate(12 12) scale(0.88) translate(-12 -12)"><path d="M4 4 L4 17 L12 11.5 Z" fill="#c6c6c6"/><path d="M16.5 10 L16.5 20 M11.5 15 L21.5 15" stroke="#c6c6c6" stroke-width="1.2"/><path d="M16.5 8.5 L18.5 11 L14.5 11 Z M16.5 21.5 L18.5 19 L14.5 19 Z M10 15 L12.5 13 L12.5 17 Z M23 15 L20.5 13 L20.5 17 Z" fill="#c6c6c6"/></g></svg><svg style="left:6px;top:55px" width="24" height="24"><g transform="translate(12 12) scale(0.88) translate(-12 -12)"><rect x="5.5" y="5.5" width="14" height="12" fill="none" stroke="#ececec" stroke-dasharray="3 2"/></g><path d="M24 19.5 L24 23 L20.5 23 Z" fill="#e2e2e2"/></svg><svg style="left:6px;top:81px" width="24" height="24"><g transform="translate(12 12) scale(0.88) translate(-12 -12)"><path d="M4 7 L10 10 L19 4 L17 15 L9 17 L4 7 Z" fill="none" stroke="#c6c6c6" stroke-width="1.4"/><path d="M9 17 C6 18 7 21 12 20" fill="none" stroke="#c6c6c6" stroke-width="1.3"/></g><path d="M24 19.5 L24 23 L20.5 23 Z" fill="#e2e2e2"/></svg><svg style="left:6px;top:107px" width="24" height="24"><g transform="translate(12 12) scale(0.88) translate(-12 -12)"><path d="M12 11 L21 21" stroke="#c6c6c6" stroke-width="2.2"/><path d="M9 2 L10 7 L14 4 L12 8.5 L17 9 L12.5 11 L15 15 L10.5 12.5 L9 17 L8 12 L3 14 L6.5 10 L2 7.5 L7 7.5 Z" fill="#c6c6c6"/></g><path d="M24 19.5 L24 23 L20.5 23 Z" fill="#e2e2e2"/></svg><svg style="left:6px;top:133px" width="24" height="24"><g transform="translate(12 12) scale(0.76) translate(-12 -12)"><path d="M7 2 L7 17 L22 17 M2 7 L17 7 L17 22" fill="none" stroke="#c6c6c6" stroke-width="3"/><rect x="8.5" y="8.5" width="7" height="7" fill="#8a8a8a"/><path d="M8 16 L21 3" stroke="#c6c6c6" stroke-width="1.3"/></g><path d="M24 19.5 L24 23 L20.5 23 Z" fill="#e2e2e2"/></svg><svg style="left:6px;top:158px" width="24" height="24"><g transform="translate(12 12) scale(0.88) translate(-12 -12)"><path d="M4 20 L5 16 L13 8 L16 11 L8 19 Z" fill="none" stroke="#c6c6c6" stroke-width="1.3"/><path d="M12 6 L18 12 M14 8 L18 4 C20 2 22 4 20 6 L16 10" stroke="#c6c6c6" stroke-width="2.6" fill="none" stroke-linecap="round"/></g><path d="M24 19.5 L24 23 L20.5 23 Z" fill="#e2e2e2"/></svg><div class="seph" style="left:4px;top:185px;width:29px"></div><svg style="left:6px;top:188px" width="24" height="24"><g transform="translate(12 12) scale(0.88) translate(-12 -12)"><g transform="rotate(-40 13 12)"><rect x="5" y="8" width="17" height="8" rx="4" fill="#c6c6c6"/><rect x="10.5" y="9" width="6" height="6" fill="#777"/></g><path d="M8 6 C3 6 2 12 5 16" fill="none" stroke="#c6c6c6" stroke-dasharray="1.2 1.2"/></g><path d="M24 19.5 L24 23 L20.5 23 Z" fill="#e2e2e2"/></svg><svg style="left:6px;top:214px" width="24" height="24"><g transform="translate(12 12) scale(0.88) translate(-12 -12)"><path d="M21 2 L10 14" stroke="#c6c6c6" stroke-width="2.2" stroke-linecap="round"/><path d="M3 19 C7 19 7 14 10 13 L12 15 C12 19 8 21 3 19 Z" fill="#c6c6c6"/></g><path d="M24 19.5 L24 23 L20.5 23 Z" fill="#e2e2e2"/></svg><svg style="left:6px;top:240px" width="24" height="24"><g transform="translate(12 12) scale(0.88) translate(-12 -12)"><circle cx="12" cy="6" r="3.2" fill="#c6c6c6"/><path d="M10.5 8 L13.5 8 L14 13 L20 13 L20 17 L4 17 L4 13 L10 13 Z" fill="#c6c6c6"/><rect x="4" y="19" width="16" height="1.8" fill="#c6c6c6"/></g><path d="M24 19.5 L24 23 L20.5 23 Z" fill="#e2e2e2"/></svg><svg style="left:6px;top:266px" width="24" height="24"><g transform="translate(12 12) scale(0.88) translate(-12 -12)"><path d="M20 4 L11 14" stroke="#c6c6c6" stroke-width="2.2" stroke-linecap="round"/><path d="M4 19 C8 19 8 15 11 14 L13 16 C13 19 9 21 4 19 Z" fill="#c6c6c6"/><path d="M4 9 C7 4 12 4 15 6" fill="none" stroke="#c6c6c6" stroke-width="1.6"/><path d="M2 6 L7 7 L4 11 Z" fill="#c6c6c6"/></g><path d="M24 19.5 L24 23 L20.5 23 Z" fill="#e2e2e2"/></svg><svg style="left:6px;top:292px" width="24" height="24"><g transform="translate(12 12) scale(0.88) translate(-12 -12)"><path d="M9 6 L21 6 L15 13 L3 13 Z" fill="#e4e4e4"/><path d="M3 13 L15 13 L15 18 L3 18 Z" fill="#bdbdbd"/><path d="M15 13 L21 6 L21 11 L15 18 Z" fill="#9a9a9a"/></g><path d="M24 19.5 L24 23 L20.5 23 Z" fill="#e2e2e2"/></svg><svg style="left:6px;top:318px" width="24" height="24"><g transform="translate(12 12) scale(0.88) translate(-12 -12)"><path d="M5 11 L13 5 L20 13 L11 20 Z" fill="#c6c6c6"/><path d="M10 9 C8 3 13 1 14 7" fill="none" stroke="#c6c6c6" stroke-width="1.5"/><path d="M19 13 C22 14 22 18 21 20 C19 18 19 15 19 13 Z" fill="#c6c6c6"/></g><path d="M24 19.5 L24 23 L20.5 23 Z" fill="#e2e2e2"/></svg><svg style="left:6px;top:344px" width="24" height="24"><g transform="translate(12 12) scale(0.88) translate(-12 -12)"><path d="M12 3 C13 8 18 11 18 15 C18 19 15 21 12 21 C9 21 6 19 6 15 C6 11 11 8 12 3 Z" fill="#c6c6c6"/></g><path d="M24 19.5 L24 23 L20.5 23 Z" fill="#e2e2e2"/></svg><svg style="left:6px;top:370px" width="24" height="24"><g transform="translate(12 12) scale(0.88) translate(-12 -12)"><circle cx="10" cy="9" r="5.5" fill="#c6c6c6"/><path d="M14 13 L21 19" stroke="#c6c6c6" stroke-width="2.6" stroke-linecap="round"/></g><path d="M24 19.5 L24 23 L20.5 23 Z" fill="#e2e2e2"/></svg><div class="seph" style="left:4px;top:396px;width:29px"></div><svg style="left:6px;top:398px" width="24" height="24"><g transform="translate(12 12) scale(0.88) translate(-12 -12)"><path d="M3 21 L6 10 L14 5 L19 10 L14 18 Z" fill="#c6c6c6"/><path d="M15 3 L21 9 L19.5 10.5 L13.5 4.5 Z" fill="#c6c6c6"/><path d="M3 21 L10 13" stroke="#555" stroke-width="1.2"/><circle cx="10.5" cy="12.5" r="1.6" fill="#555"/></g><path d="M24 19.5 L24 23 L20.5 23 Z" fill="#e2e2e2"/></svg><svg style="left:6px;top:424px" width="24" height="24"><g transform="translate(12 12) scale(0.88) translate(-12 -12)"><text x="12" y="20" font-family="Liberation Serif,serif" font-size="22" text-anchor="middle" fill="#dedede">T</text></g><path d="M24 19.5 L24 23 L20.5 23 Z" fill="#e2e2e2"/></svg><svg style="left:6px;top:451px" width="24" height="24"><g transform="translate(12 12) scale(0.88) translate(-12 -12)"><path d="M7 3 L7 19 L11 15.5 L14 22 L16.5 21 L13.5 14.5 L18.5 14.5 Z" fill="#1c1c1c" stroke="#e8e8e8" stroke-width="1.1"/></g><path d="M24 19.5 L24 23 L20.5 23 Z" fill="#e2e2e2"/></svg><svg style="left:6px;top:477px" width="24" height="24"><g transform="translate(12 12) scale(0.88) translate(-12 -12)"><rect x="5.5" y="6.5" width="14" height="11" fill="#9a9a9a" stroke="#d8d8d8"/></g><path d="M24 19.5 L24 23 L20.5 23 Z" fill="#e2e2e2"/></svg><div class="seph" style="left:4px;top:503px;width:29px"></div><svg style="left:6px;top:505px" width="24" height="24"><g transform="translate(12 12) scale(0.88) translate(-12 -12)"><path d="M6 12 L4 9.5 C3 8 5 7 6 8.5 L8 11 L8 5 C8 3.5 10 3.5 10 5 L10.5 9 L11 3.5 C11 2 13 2 13 3.5 L13.3 9 L14.5 4.5 C15 3 17 3.5 16.6 5 L16 10 L18 7 C19 5.5 20.5 6.5 20 8 L18 14 C17.5 18 16 19 15 21 L9 21 C8.5 18 7 14 6 12 Z" fill="#c6c6c6"/></g><path d="M24 19.5 L24 23 L20.5 23 Z" fill="#e2e2e2"/></svg><svg style="left:6px;top:531px" width="24" height="24"><g transform="translate(12 12) scale(0.88) translate(-12 -12)"><circle cx="10" cy="9" r="5.8" fill="#a8a8a8" stroke="#c6c6c6" stroke-width="1.6"/><path d="M14.5 13.5 L21 20" stroke="#c6c6c6" stroke-width="2.8" stroke-linecap="round"/></g></svg><svg style="left:3px;top:559px" width="12" height="12"><rect x="3.5" y="3.5" width="7" height="7" fill="#d0d0d0" stroke="#8a8a8a"/><rect x="0.5" y="0.5" width="7" height="7" fill="#1e1e1e" stroke="#d0d0d0"/></svg><svg style="left:21px;top:558px" width="12" height="13"><path d="M3 4 L8 4 L8 10" fill="none" stroke="#d8d8d8" stroke-width="1.3"/><path d="M0 4 L4 1 L4 7 Z M8 13 L5 9 L11 9 Z" fill="#d8d8d8"/></svg><div class="a" style="left:13px;top:585px;width:20px;height:20px;background:#ff0000;border:1px solid #fff;outline:1px solid #3a3a3a"></div><div class="a" style="left:4px;top:575px;width:19px;height:19px;background:#ff0000;border:1px solid #fff;outline:1px solid #3a3a3a"></div><svg style="left:9px;top:612px" width="18" height="14"><rect x="0.5" y="0.5" width="17" height="13" fill="#3a3a3a" stroke="#d0d0d0"/><circle cx="9" cy="7" r="4" fill="none" stroke="#e8e8e8" stroke-dasharray="1.2 1.2"/></svg><svg style="left:9px;top:639px" width="24" height="20"><rect x="0.5" y="4.5" width="12" height="9" fill="#777" stroke="#cfcfcf"/><rect x="5.5" y="0.5" width="12" height="9" fill="#8a8a8a" stroke="#d8d8d8"/><path d="M22 13 L22 16.5 L18.5 16.5 Z" fill="#e2e2e2"/></svg></div>
<div class="a" style="left:38px;top:62px;width:1603px;height:964px;background:#343434"></div><div class="a" style="left:39px;top:62px;width:1600px;height:21px;background:linear-gradient(#333,#3c3c3c);border-top:1px solid #2c2c2c"></div><div class="a" style="left:41px;top:64px;width:279px;height:19px;background:#535353;border-top:1px solid #666;border-radius:1px 1px 0 0"><div class="t b" style="left:10px;top:2px;font-size:12.1px;line-height:15px;color:#f0f0f0">201709a-1000-1.gif @ 50% (Layer 1, RGB/8)</div><svg style="left:267px;top:5px" width="7" height="7"><path d="M0.5 0.5 L6.5 6.5 M6.5 0.5 L0.5 6.5" stroke="#e6e6e6" stroke-width="1.3"/></svg></div><div class="a" style="left:41px;top:83px;width:1581px;height:819px;background:#282828"></div><div class="a" style="left:41px;top:83px;width:1581px;height:18px;background:#2b2b2b;border-bottom:1px solid #505050"></div><div class="a" style="left:41px;top:83px;width:18px;height:819px;background:#2b2b2b;border-right:1px solid #505050"></div><div class="a" style="left:41px;top:83px;width:17px;height:17px;background:#4b4b4b;border-right:1px dotted #777;border-bottom:1px dotted #777"></div><svg style="left:0;top:83px" width="1622" height="18" shape-rendering="crispEdges"><rect x="59" y="15" width="1" height="2" fill="#666"/><rect x="66" y="13" width="1" height="4" fill="#707070"/><rect x="73" y="15" width="1" height="2" fill="#666"/><rect x="80" y="13" width="1" height="4" fill="#707070"/><rect x="87" y="15" width="1" height="2" fill="#666"/><rect x="95" y="0" width="1" height="17" fill="#7a7a7a"/><rect x="102" y="15" width="1" height="2" fill="#666"/><rect x="109" y="13" width="1" height="4" fill="#707070"/><rect x="116" y="15" width="1" height="2" fill="#666"/><rect x="123" y="13" width="1" height="4" fill="#707070"/><rect x="130" y="15" width="1" height="2" fill="#666"/><rect x="137" y="13" width="1" height="4" fill="#707070"/><rect x="144" y="15" width="1" height="2" fill="#666"/><rect x="151" y="13" width="1" height="4" fill="#707070"/><rect x="158" y="15" width="1" height="2" fill="#666"/><rect x="165" y="0" width="1" height="17" fill="#7a7a7a"/><rect x="172" y="15" width="1" height="2" fill="#666"/><rect x="180" y="13" width="1" height="4" fill="#707070"/><rect x="187" y="15" width="1" height="2" fill="#666"/><rect x="194" y="13" width="1" height="4" fill="#707070"/><rect x="201" y="15" width="1" height="2" fill="#666"/><rect x="208" y="13" width="1" height="4" fill="#707070"/><rect x="215" y="15" width="1" height="2" fill="#666"/><rect x="222" y="13" width="1" height="4" fill="#707070"/><rect x="229" y="15" width="1" height="2" fill="#666"/><rect x="236" y="0" width="1" height="17" fill="#7a7a7a"/><rect x="243" y="15" width="1" height="2" fill="#666"/><rect x="250" y="13" width="1" height="4" fill="#707070"/><rect x="258" y="15" width="1" height="2" fill="#666"/><rect x="265" y="13" width="1" height="4" fill="#707070"/><rect x="272" y="15" width="1" height="2" fill="#666"/><rect x="279" y="13" width="1" height="4" fill="#707070"/><rect x="286" y="15" width="1" height="2" fill="#666"/><rect x="293" y="13" width="1" height="4" fill="#707070"/><rect x="300" y="15" width="1" height="2" fill="#666"/><rect x="307" y="0" width="1" height="17" fill="#7a7a7a"/><rect x="314" y="15" width="1" height="2" fill="#666"/><rect x="321" y="13" width="1" height="4" fill="#707070"/><rect x="328" y="15" width="1" height="2" fill="#666"/><rect x="335" y="13" width="1" height="4" fill="#707070"/><rect x="343" y="15" width="1" height="2" fill="#666"/><rect x="350" y="13" width="1" height="4" fill="#707070"/><rect x="357" y="15" width="1" height="2" fill="#666"/><rect x="364" y="13" width="1" height="4" fill="#707070"/><rect x="371" y="15" width="1" height="2" fill="#666"/><rect x="378" y="0" width="1" height="17" fill="#7a7a7a"/><rect x="385" y="15" width="1" height="2" fill="#666"/><rect x="392" y="13" width="1" height="4" fill="#707070"/><rect x="399" y="15" width="1" height="2" fill="#666"/><rect x="406" y="13" width="1" height="4" fill="#707070"/><rect x="413" y="15" width="1" height="2" fill="#666"/><rect x="421" y="13" width="1" height="4" fill="#707070"/><rect x="428" y="15" width="1" height="2" fill="#666"/><rect x="435" y="13" width="1" height="4" fill="#707070"/><rect x="442" y="15" width="1" height="2" fill="#666"/><rect x="449" y="0" width="1" height="17" fill="#7a7a7a"/><rect x="456" y="15" width="1" height="2" fill="#666"/><rect x="463" y="13" width="1" height="4" fill="#707070"/><rect x="470" y="15" width="1" height="2" fill="#666"/><rect x="477" y="13" width="1" height="4" fill="#707070"/><rect x="484" y="15" width="1" height="2" fill="#666"/><rect x="491" y="13" width="1" height="4" fill="#707070"/><rect x="498" y="15" width="1" height="2" fill="#666"/><rect x="506" y="13" width="1" height="4" fill="#707070"/><rect x="513" y="15" width="1" height="2" fill="#666"/><rect x="520" y="0" width="1" height="17" fill="#7a7a7a"/><rect x="527" y="15" width="1" height="2" fill="#666"/><rect x="534" y="13" width="1" height="4" fill="#707070"/><rect x="541" y="15" width="1" height="2" fill="#666"/><rect x="548" y="13" width="1" height="4" fill="#707070"/><rect x="555" y="15" width="1" height="2" fill="#666"/><rect x="562" y="13" width="1" height="4" fill="#707070"/><rect x="569" y="15" width="1" height="2" fill="#666"/><rect x="576" y="13" width="1" height="4" fill="#707070"/><rect x="584" y="15" width="1" height="2" fill="#666"/><rect x="591" y="0" width="1" height="17" fill="#7a7a7a"/><rect x="598" y="15" width="1" height="2" fill="#666"/><rect x="605" y="13" width="1" height="4" fill="#707070"/><rect x="612" y="15" width="1" height="2" fill="#666"/><rect x="619" y="13" width="1" height="4" fill="#707070"/><rect x="626" y="15" width="1" height="2" fill="#666"/><rect x="633" y="13" width="1" height="4" fill="#707070"/><rect x="640" y="15" width="1" height="2" fill="#666"/><rect x="647" y="13" width="1" height="4" fill="#707070"/><rect x="654" y="15" width="1" height="2" fill="#666"/><rect x="661" y="0" width="1" height="17" fill="#7a7a7a"/><rect x="669" y="15" width="1" height="2" fill="#666"/><rect x="676" y="13" width="1" height="4" fill="#707070"/><rect x="683" y="15" width="1" height="2" fill="#666"/><rect x="690" y="13" width="1" height="4" fill="#707070"/><rect x="697" y="15" width="1" height="2" fill="#666"/><rect x="704" y="13" width="1" height="4" fill="#707070"/><rect x="711" y="15" width="1" height="2" fill="#666"/><rect x="718" y="13" width="1" height="4" fill="#707070"/><rect x="725" y="15" width="1" height="2" fill="#666"/><rect x="732" y="0" width="1" height="17" fill="#7a7a7a"/><rect x="739" y="15" width="1" height="2" fill="#666"/><rect x="747" y="13" width="1" height="4" fill="#707070"/><rect x="754" y="15" width="1" height="2" fill="#666"/><rect x="761" y="13" width="1" height="4" fill="#707070"/><rect x="768" y="15" width="1" height="2" fill="#666"/><rect x="775" y="13" width="1" height="4" fill="#707070"/><rect x="782" y="15" width="1" height="2" fill="#666"/><rect x="789" y="13" width="1" height="4" fill="#707070"/><rect x="796" y="15" width="1" height="2" fill="#666"/><rect x="803" y="0" width="1" height="17" fill="#7a7a7a"/><rect x="810" y="15" width="1" height="2" fill="#666"/><rect x="817" y="13" width="1" height="4" fill="#707070"/><rect x="824" y="15" width="1" height="2" fill="#666"/><rect x="832" y="13" width="1" height="4" fill="#707070"/><rect x="839" y="15" width="1" height="2" fill="#666"/><rect x="846" y="13" width="1" height="4" fill="#707070"/><rect x="853" y="15" width="1" height="2" fill="#666"/><rect x="860" y="13" width="1" height="4" fill="#707070"/><rect x="867" y="15" width="1" height="2" fill="#666"/><rect x="874" y="0" width="1" height="17" fill="#7a7a7a"/><rect x="881" y="15" width="1" height="2" fill="#666"/><rect x="888" y="13" width="1" height="4" fill="#707070"/><rect x="895" y="15" width="1" height="2" fill="#666"/><rect x="902" y="13" width="1" height="4" fill="#707070"/><rect x="909" y="15" width="1" height="2" fill="#666"/><rect x="917" y="13" width="1" height="4" fill="#707070"/><rect x="924" y="15" width="1" height="2" fill="#666"/><rect x="931" y="13" width="1" height="4" fill="#707070"/><rect x="938" y="15" width="1" height="2" fill="#666"/><rect x="945" y="0" width="1" height="17" fill="#7a7a7a"/><rect x="952" y="15" width="1" height="2" fill="#666"/><rect x="959" y="13" width="1" height="4" fill="#707070"/><rect x="966" y="15" width="1" height="2" fill="#666"/><rect x="973" y="13" width="1" height="4" fill="#707070"/><rect x="980" y="15" width="1" height="2" fill="#666"/><rect x="987" y="13" width="1" height="4" fill="#707070"/><rect x="995" y="15" width="1" height="2" fill="#666"/><rect x="1002" y="13" width="1" height="4" fill="#707070"/><rect x="1009" y="15" width="1" height="2" fill="#666"/><rect x="1016" y="0" width="1" height="17" fill="#7a7a7a"/><rect x="1023" y="15" width="1" height="2" fill="#666"/><rect x="1030" y="13" width="1" height="4" fill="#707070"/><rect x="1037" y="15" width="1" height="2" fill="#666"/><rect x="1044" y="13" width="1" height="4" fill="#707070"/><rect x="1051" y="15" width="1" height="2" fill="#666"/><rect x="1058" y="13" width="1" height="4" fill="#707070"/><rect x="1065" y="15" width="1" height="2" fill="#666"/><rect x="1072" y="13" width="1" height="4" fill="#707070"/><rect x="1080" y="15" width="1" height="2" fill="#666"/><rect x="1087" y="0" width="1" height="17" fill="#7a7a7a"/><rect x="1094" y="15" width="1" height="2" fill="#666"/><rect x="1101" y="13" width="1" height="4" fill="#707070"/><rect x="1108" y="15" width="1" height="2" fill="#666"/><rect x="1115" y="13" width="1" height="4" fill="#707070"/><rect x="1122" y="15" width="1" height="2" fill="#666"/><rect x="1129" y="13" width="1" height="4" fill="#707070"/><rect x="1136" y="15" width="1" height="2" fill="#666"/><rect x="1143" y="13" width="1" height="4" fill="#707070"/><rect x="1150" y="15" width="1" height="2" fill="#666"/><rect x="1158" y="0" width="1" height="17" fill="#7a7a7a"/><rect x="1165" y="15" width="1" height="2" fill="#666"/><rect x="1172" y="13" width="1" height="4" fill="#707070"/><rect x="1179" y="15" width="1" height="2" fill="#666"/><rect x="1186" y="13" width="1" height="4" fill="#707070"/><rect x="1193" y="15" width="1" height="2" fill="#666"/><rect x="1200" y="13" width="1" height="4" fill="#707070"/><rect x="1207" y="15" width="1" height="2" fill="#666"/><rect x="1214" y="13" width="1" height="4" fill="#707070"/><rect x="1221" y="15" width="1" height="2" fill="#666"/><rect x="1228" y="0" width="1" height="17" fill="#7a7a7a"/><rect x="1235" y="15" width="1" height="2" fill="#666"/><rect x="1243" y="13" width="1" height="4" fill="#707070"/><rect x="1250" y="15" width="1" height="2" fill="#666"/><rect x="1257" y="13" width="1" height="4" fill="#707070"/><rect x="1264" y="15" width="1" height="2" fill="#666"/><rect x="1271" y="13" width="1" height="4" fill="#707070"/><rect x="1278" y="15" width="1" height="2" fill="#666"/><rect x="1285" y="13" width="1" height="4" fill="#707070"/><rect x="1292" y="15" width="1" height="2" fill="#666"/><rect x="1299" y="0" width="1" height="17" fill="#7a7a7a"/><rect x="1306" y="15" width="1" height="2" fill="#666"/><rect x="1313" y="13" width="1" height="4" fill="#707070"/><rect x="1321" y="15" width="1" height="2" fill="#666"/><rect x="1328" y="13" width="1" height="4" fill="#707070"/><rect x="1335" y="15" width="1" height="2" fill="#666"/><rect x="1342" y="13" width="1" height="4" fill="#707070"/><rect x="1349" y="15" width="1" height="2" fill="#666"/><rect x="1356" y="13" width="1" height="4" fill="#707070"/><rect x="1363" y="15" width="1" height="2" fill="#666"/><rect x="1370" y="0" width="1" height="17" fill="#7a7a7a"/><rect x="1377" y="15" width="1" height="2" fill="#666"/><rect x="1384" y="13" width="1" height="4" fill="#707070"/><rect x="1391" y="15" width="1" height="2" fill="#666"/><rect x="1398" y="13" width="1" height="4" fill="#707070"/><rect x="1406" y="15" width="1" height="2" fill="#666"/><rect x="1413" y="13" width="1" height="4" fill="#707070"/><rect x="1420" y="15" width="1" height="2" fill="#666"/><rect x="1427" y="13" width="1" height="4" fill="#707070"/><rect x="1434" y="15" width="1" height="2" fill="#666"/><rect x="1441" y="0" width="1" height="17" fill="#7a7a7a"/><rect x="1448" y="15" width="1" height="2" fill="#666"/><rect x="1455" y="13" width="1" height="4" fill="#707070"/><rect x="1462" y="15" width="1" height="2" fill="#666"/><rect x="1469" y="13" width="1" height="4" fill="#707070"/><rect x="1476" y="15" width="1" height="2" fill="#666"/><rect x="1484" y="13" width="1" height="4" fill="#707070"/><rect x="1491" y="15" width="1" height="2" fill="#666"/><rect x="1498" y="13" width="1" height="4" fill="#707070"/><rect x="1505" y="15" width="1" height="2" fill="#666"/><rect x="1512" y="0" width="1" height="17" fill="#7a7a7a"/><rect x="1519" y="15" width="1" height="2" fill="#666"/><rect x="1526" y="13" width="1" height="4" fill="#707070"/><rect x="1533" y="15" width="1" height="2" fill="#666"/><rect x="1540" y="13" width="1" height="4" fill="#707070"/><rect x="1547" y="15" width="1" height="2" fill="#666"/><rect x="1554" y="13" width="1" height="4" fill="#707070"/><rect x="1561" y="15" width="1" height="2" fill="#666"/><rect x="1569" y="13" width="1" height="4" fill="#707070"/><rect x="1576" y="15" width="1" height="2" fill="#666"/><rect x="1583" y="0" width="1" height="17" fill="#7a7a7a"/><rect x="1590" y="15" width="1" height="2" fill="#666"/><rect x="1597" y="13" width="1" height="4" fill="#707070"/><rect x="1604" y="15" width="1" height="2" fill="#666"/><rect x="1611" y="13" width="1" height="4" fill="#707070"/><rect x="1618" y="15" width="1" height="2" fill="#666"/></svg><div class="t" style="left:98.0px;top:85px;font-size:10px;line-height:12px;color:#b4b4b4">35</div><div class="t" style="left:168.9px;top:85px;font-size:10px;line-height:12px;color:#b4b4b4">30</div><div class="t" style="left:239.8px;top:85px;font-size:10px;line-height:12px;color:#b4b4b4">25</div><div class="t" style="left:310.6px;top:85px;font-size:10px;line-height:12px;color:#b4b4b4">20</div><div class="t" style="left:381.5px;top:85px;font-size:10px;line-height:12px;color:#b4b4b4">15</div><div class="t" style="left:452.4px;top:85px;font-size:10px;line-height:12px;color:#b4b4b4">10</div><div class="t" style="left:523.2px;top:85px;font-size:10px;line-height:12px;color:#b4b4b4">5</div><div class="t" style="left:594.1px;top:85px;font-size:10px;line-height:12px;color:#b4b4b4">0</div><div class="t" style="left:665.0px;top:85px;font-size:10px;line-height:12px;color:#b4b4b4">5</div><div class="t" style="left:735.8px;top:85px;font-size:10px;line-height:12px;color:#b4b4b4">10</div><div class="t" style="left:806.7px;top:85px;font-size:10px;line-height:12px;color:#b4b4b4">15</div><div class="t" style="left:877.6px;top:85px;font-size:10px;line-height:12px;color:#b4b4b4">20</div><div class="t" style="left:948.4px;top:85px;font-size:10px;line-height:12px;color:#b4b4b4">25</div><div class="t" style="left:1019.3px;top:85px;font-size:10px;line-height:12px;color:#b4b4b4">30</div><div class="t" style="left:1090.2px;top:85px;font-size:10px;line-height:12px;color:#b4b4b4">35</div><div class="t" style="left:1161.0px;top:85px;font-size:10px;line-height:12px;color:#b4b4b4">40</div><div class="t" style="left:1231.9px;top:85px;font-size:10px;line-height:12px;color:#b4b4b4">45</div><div class="t" style="left:1302.8px;top:85px;font-size:10px;line-height:12px;color:#b4b4b4">50</div><div class="t" style="left:1373.6px;top:85px;font-size:10px;line-height:12px;color:#b4b4b4">55</div><div class="t" style="left:1444.5px;top:85px;font-size:10px;line-height:12px;color:#b4b4b4">60</div><div class="t" style="left:1515.4px;top:85px;font-size:10px;line-height:12px;color:#b4b4b4">65</div><div class="t" style="left:1586.2px;top:85px;font-size:10px;line-height:12px;color:#b4b4b4">70</div><svg style="left:41px;top:0" width="18" height="902" shape-rendering="crispEdges"><rect x="15" y="104" width="2" height="1" fill="#666"/><rect x="0" y="111" width="17" height="1" fill="#7a7a7a"/><rect x="15" y="118" width="2" height="1" fill="#666"/><rect x="13" y="125" width="4" height="1" fill="#707070"/><rect x="15" y="132" width="2" height="1" fill="#666"/><rect x="13" y="139" width="4" height="1" fill="#707070"/><rect x="15" y="147" width="2" height="1" fill="#666"/><rect x="13" y="154" width="4" height="1" fill="#707070"/><rect x="15" y="161" width="2" height="1" fill="#666"/><rect x="13" y="168" width="4" height="1" fill="#707070"/><rect x="15" y="175" width="2" height="1" fill="#666"/><rect x="0" y="182" width="17" height="1" fill="#7a7a7a"/><rect x="15" y="189" width="2" height="1" fill="#666"/><rect x="13" y="196" width="4" height="1" fill="#707070"/><rect x="15" y="203" width="2" height="1" fill="#666"/><rect x="13" y="210" width="4" height="1" fill="#707070"/><rect x="15" y="217" width="2" height="1" fill="#666"/><rect x="13" y="225" width="4" height="1" fill="#707070"/><rect x="15" y="232" width="2" height="1" fill="#666"/><rect x="13" y="239" width="4" height="1" fill="#707070"/><rect x="15" y="246" width="2" height="1" fill="#666"/><rect x="0" y="253" width="17" height="1" fill="#7a7a7a"/><rect x="15" y="260" width="2" height="1" fill="#666"/><rect x="13" y="267" width="4" height="1" fill="#707070"/><rect x="15" y="274" width="2" height="1" fill="#666"/><rect x="13" y="281" width="4" height="1" fill="#707070"/><rect x="15" y="288" width="2" height="1" fill="#666"/><rect x="13" y="295" width="4" height="1" fill="#707070"/><rect x="15" y="302" width="2" height="1" fill="#666"/><rect x="13" y="310" width="4" height="1" fill="#707070"/><rect x="15" y="317" width="2" height="1" fill="#666"/><rect x="0" y="324" width="17" height="1" fill="#7a7a7a"/><rect x="15" y="331" width="2" height="1" fill="#666"/><rect x="13" y="338" width="4" height="1" fill="#707070"/><rect x="15" y="345" width="2" height="1" fill="#666"/><rect x="13" y="352" width="4" height="1" fill="#707070"/><rect x="15" y="359" width="2" height="1" fill="#666"/><rect x="13" y="366" width="4" height="1" fill="#707070"/><rect x="15" y="373" width="2" height="1" fill="#666"/><rect x="13" y="380" width="4" height="1" fill="#707070"/><rect x="15" y="388" width="2" height="1" fill="#666"/><rect x="0" y="395" width="17" height="1" fill="#7a7a7a"/><rect x="15" y="402" width="2" height="1" fill="#666"/><rect x="13" y="409" width="4" height="1" fill="#707070"/><rect x="15" y="416" width="2" height="1" fill="#666"/><rect x="13" y="423" width="4" height="1" fill="#707070"/><rect x="15" y="430" width="2" height="1" fill="#666"/><rect x="13" y="437" width="4" height="1" fill="#707070"/><rect x="15" y="444" width="2" height="1" fill="#666"/><rect x="13" y="451" width="4" height="1" fill="#707070"/><rect x="15" y="458" width="2" height="1" fill="#666"/><rect x="0" y="465" width="17" height="1" fill="#7a7a7a"/><rect x="15" y="473" width="2" height="1" fill="#666"/><rect x="13" y="480" width="4" height="1" fill="#707070"/><rect x="15" y="487" width="2" height="1" fill="#666"/><rect x="13" y="494" width="4" height="1" fill="#707070"/><rect x="15" y="501" width="2" height="1" fill="#666"/><rect x="13" y="508" width="4" height="1" fill="#707070"/><rect x="15" y="515" width="2" height="1" fill="#666"/><rect x="13" y="522" width="4" height="1" fill="#707070"/><rect x="15" y="529" width="2" height="1" fill="#666"/><rect x="0" y="536" width="17" height="1" fill="#7a7a7a"/><rect x="15" y="543" width="2" height="1" fill="#666"/><rect x="13" y="551" width="4" height="1" fill="#707070"/><rect x="15" y="558" width="2" height="1" fill="#666"/><rect x="13" y="565" width="4" height="1" fill="#707070"/><rect x="15" y="572" width="2" height="1" fill="#666"/><rect x="13" y="579" width="4" height="1" fill="#707070"/><rect x="15" y="586" width="2" height="1" fill="#666"/><rect x="13" y="593" width="4" height="1" fill="#707070"/><rect x="15" y="600" width="2" height="1" fill="#666"/><rect x="0" y="607" width="17" height="1" fill="#7a7a7a"/><rect x="15" y="614" width="2" height="1" fill="#666"/><rect x="13" y="621" width="4" height="1" fill="#707070"/><rect x="15" y="628" width="2" height="1" fill="#666"/><rect x="13" y="636" width="4" height="1" fill="#707070"/><rect x="15" y="643" width="2" height="1" fill="#666"/><rect x="13" y="650" width="4" height="1" fill="#707070"/><rect x="15" y="657" width="2" height="1" fill="#666"/><rect x="13" y="664" width="4" height="1" fill="#707070"/><rect x="15" y="671" width="2" height="1" fill="#666"/><rect x="0" y="678" width="17" height="1" fill="#7a7a7a"/><rect x="15" y="685" width="2" height="1" fill="#666"/><rect x="13" y="692" width="4" height="1" fill="#707070"/><rect x="15" y="699" width="2" height="1" fill="#666"/><rect x="13" y="706" width="4" height="1" fill="#707070"/><rect x="15" y="713" width="2" height="1" fill="#666"/><rect x="13" y="721" width="4" height="1" fill="#707070"/><rect x="15" y="728" width="2" height="1" fill="#666"/><rect x="13" y="735" width="4" height="1" fill="#707070"/><rect x="15" y="742" width="2" height="1" fill="#666"/><rect x="0" y="749" width="17" height="1" fill="#7a7a7a"/><rect x="15" y="756" width="2" height="1" fill="#666"/><rect x="13" y="763" width="4" height="1" fill="#707070"/><rect x="15" y="770" width="2" height="1" fill="#666"/><rect x="13" y="777" width="4" height="1" fill="#707070"/><rect x="15" y="784" width="2" height="1" fill="#666"/><rect x="13" y="791" width="4" height="1" fill="#707070"/><rect x="15" y="799" width="2" height="1" fill="#666"/><rect x="13" y="806" width="4" height="1" fill="#707070"/><rect x="15" y="813" width="2" height="1" fill="#666"/><rect x="0" y="820" width="17" height="1" fill="#7a7a7a"/><rect x="15" y="827" width="2" height="1" fill="#666"/><rect x="13" y="834" width="4" height="1" fill="#707070"/><rect x="15" y="841" width="2" height="1" fill="#666"/><rect x="13" y="848" width="4" height="1" fill="#707070"/><rect x="15" y="855" width="2" height="1" fill="#666"/><rect x="13" y="862" width="4" height="1" fill="#707070"/><rect x="15" y="869" width="2" height="1" fill="#666"/><rect x="13" y="876" width="4" height="1" fill="#707070"/><rect x="15" y="884" width="2" height="1" fill="#666"/><rect x="0" y="891" width="17" height="1" fill="#7a7a7a"/><rect x="15" y="898" width="2" height="1" fill="#666"/></svg><div class="t" style="left:43.5px;top:114.4px;font-size:10px;line-height:12px;color:#b4b4b4">2</div><div class="t" style="left:43.5px;top:126.4px;font-size:10px;line-height:12px;color:#b4b4b4">0</div><div class="t" style="left:43.5px;top:185.3px;font-size:10px;line-height:12px;color:#b4b4b4">1</div><div class="t" style="left:43.5px;top:197.3px;font-size:10px;line-height:12px;color:#b4b4b4">5</div><div class="t" style="left:43.5px;top:256.2px;font-size:10px;line-height:12px;color:#b4b4b4">1</div><div class="t" style="left:43.5px;top:268.2px;font-size:10px;line-height:12px;color:#b4b4b4">0</div><div class="t" style="left:43.5px;top:327.0px;font-size:10px;line-height:12px;color:#b4b4b4">5</div><div class="t" style="left:43.5px;top:397.9px;font-size:10px;line-height:12px;color:#b4b4b4">0</div><div class="t" style="left:43.5px;top:468.8px;font-size:10px;line-height:12px;color:#b4b4b4">5</div><div class="t" style="left:43.5px;top:539.6px;font-size:10px;line-height:12px;color:#b4b4b4">1</div><div class="t" style="left:43.5px;top:551.6px;font-size:10px;line-height:12px;color:#b4b4b4">0</div><div class="t" style="left:43.5px;top:610.5px;font-size:10px;line-height:12px;color:#b4b4b4">1</div><div class="t" style="left:43.5px;top:622.5px;font-size:10px;line-height:12px;color:#b4b4b4">5</div><div class="t" style="left:43.5px;top:681.4px;font-size:10px;line-height:12px;color:#b4b4b4">2</div><div class="t" style="left:43.5px;top:693.4px;font-size:10px;line-height:12px;color:#b4b4b4">0</div><div class="t" style="left:43.5px;top:752.2px;font-size:10px;line-height:12px;color:#b4b4b4">2</div><div class="t" style="left:43.5px;top:764.2px;font-size:10px;line-height:12px;color:#b4b4b4">5</div><div class="t" style="left:43.5px;top:823.1px;font-size:10px;line-height:12px;color:#b4b4b4">3</div><div class="t" style="left:43.5px;top:835.1px;font-size:10px;line-height:12px;color:#b4b4b4">0</div><div class="t" style="left:43.5px;top:894.0px;font-size:10px;line-height:12px;color:#b4b4b4">3</div><div class="a" style="left:590px;top:395px;width:500px;height:213px;box-shadow:1px 1px 3px rgba(0,0,0,.6)"><svg style="left:0;top:0" width="500" height="213"><use href="#photo" width="500" height="213"/></svg></div><div class="a" style="left:1622px;top:83px;width:17px;height:819px;background:linear-gradient(90deg,#2f2f2f,#3d3d3d 40%,#454545);border-left:1px solid #2a2a2a"></div><div class="a" style="left:41px;top:902px;width:1598px;height:16px;background:linear-gradient(#2f2f2f,#3f3f3f 45%,#484848)"></div><div class="a" style="left:1622px;top:902px;width:17px;height:16px;background:#535353"></div><div class="a" style="left:41px;top:902px;width:255px;height:16px;background:#535353;border-top:1px solid #474747"></div><div class="a" style="left:41px;top:902px;width:48px;height:16px;background:#3c3c3c"></div><div class="t" style="left:53px;top:903px;font-size:11px;color:#f0f0f0">50%</div><div class="a" style="left:89px;top:902px;width:24px;height:16px;background:#5b5b5b;border-left:1px solid #444;border-right:1px solid #444"></div><svg style="left:94px;top:904px" width="13" height="13"><circle cx="6.5" cy="6.5" r="5.2" fill="#d4d4d4"/><path d="M4.5 4 L7 4 L9 6 L9 9 L4.5 9 Z" fill="#8a8a8a" stroke="#555" stroke-width=".6"/></svg><div class="t" style="left:152px;top:903px;font-size:11px;color:#ececec">Doc: 1.22M/7.30M</div><div class="a" style="left:283px;top:902px;width:13px;height:16px;background:#5b5b5b;border-left:1px solid #444"></div><svg style="left:286px;top:905px" width="8" height="11"><path d="M0.5 0.5 L7 5.5 L0.5 10.5 Z" fill="#ececec"/></svg>
<div class="panel" style="left:1366px;top:73px;width:235px;height:264px;border-radius:3px 0 0 0;box-shadow:-1px 0 0 #2e2e2e,0 1px 0 #2e2e2e"><div class="a" style="left:0;top:0;width:235px;height:14px;background:#3a3a3a;border-radius:3px 0 0 0;border-bottom:1px solid #333"></div><div class="t b" style="left:7px;top:16px;font-size:11px;color:#f0f0f0">Character</div><div class="fld" style="left:9px;top:37px;width:120px;height:20px"><div class="t" style="left:4px;top:2px">Gulim</div></div><div class="seph" style="left:0;top:62px;width:235px"></div><svg style="left:3px;top:70px" width="18" height="16"><text x="0" y="14" font-family="Liberation Serif,serif" font-size="9" fill="#bdbdbd">T</text><text x="5" y="14" font-family="Liberation Serif,serif" font-size="16" fill="#c8c8c8">T</text></svg><div class="fld" style="left:23px;top:68px;width:60px;height:20px"><div class="t" style="left:3px;top:2px">72 pt</div></div><svg style="left:2px;top:94px" width="20" height="18"><text x="0" y="13" font-family="Liberation Sans,sans-serif" font-size="13" fill="#c8c8c8" letter-spacing="-2">VA</text><path d="M3 8 L16 8" stroke="#c8c8c8" stroke-width=".8" opacity="0"/><path d="M9 16 L16 16 M9 16 L11.5 14 M9 16 L11.5 18" stroke="#c8c8c8" fill="none"/><path d="M4.5 15 L13.5 2" stroke="#c8c8c8" stroke-width="1"/></svg><div class="fld" style="left:23px;top:93px;width:60px;height:20px"><div class="t" style="left:2px;top:2px">Metrics</div></div><div class="seph" style="left:0;top:118px;width:235px"></div><svg style="left:2px;top:123px" width="20" height="18"><path d="M3 2 L3 15 M1 4.5 L3 2 L5 4.5 M1 12.5 L3 15 L5 12.5" stroke="#c8c8c8" fill="none"/><text x="6" y="15" font-family="Liberation Serif,serif" font-size="17" fill="#c8c8c8">T</text></svg><div class="fld" style="left:23px;top:123px;width:60px;height:20px"><div class="t" style="left:4px;top:2px">100%</div></div><svg style="left:2px;top:146px" width="20" height="18"><text x="1" y="10" font-family="Liberation Sans,sans-serif" font-size="11" fill="#c8c8c8">A</text><text x="9" y="10" font-family="Liberation Sans,sans-serif" font-size="8" fill="#c8c8c8">a</text><path d="M1 12.5 L8 12.5 M10 12.5 L15 12.5" stroke="#c8c8c8"/><path d="M12.5 18 L12.5 13.5 M11 15.5 L12.5 13.5 L14 15.5" stroke="#c8c8c8" fill="none" stroke-width=".9"/></svg><div class="fld" style="left:23px;top:145px;width:55px;height:19px"><div class="t" style="left:3px;top:1px">0 pt</div></div><div class="t" style="left:128px;top:146px;font-size:11px">Color:</div><div class="a" style="left:166px;top:144px;width:54px;height:20px;background:#ff0000;border:1px solid #7a2a2a"></div><div class="seph" style="left:0;top:169px;width:230px"></div><svg style="left:21px;top:176px" width="20" height="18" fill="#c9c9c9" font-family="Liberation Serif,serif" font-weight="bold"><text x="10" y="15" font-size="16" font-weight="bold" text-anchor="middle">T</text></svg><svg style="left:45px;top:176px" width="20" height="18" fill="#c9c9c9" font-family="Liberation Serif,serif" font-weight="bold"><text x="10" y="15" font-size="16" font-style="italic" text-anchor="middle">T</text></svg><svg style="left:69px;top:176px" width="20" height="18" fill="#c9c9c9" font-family="Liberation Serif,serif" font-weight="bold"><text x="10" y="15" font-size="15" text-anchor="middle" letter-spacing="-1">TT</text></svg><svg style="left:93px;top:176px" width="20" height="18" fill="#c9c9c9" font-family="Liberation Serif,serif" font-weight="bold"><text x="1" y="15" font-size="15">T</text><text x="10" y="15" font-size="11">T</text></svg><svg style="left:117px;top:176px" width="20" height="18" fill="#c9c9c9" font-family="Liberation Serif,serif" font-weight="bold"><text x="2" y="15" font-size="15">T</text><text x="12" y="8" font-size="6">1</text></svg><svg style="left:141px;top:176px" width="20" height="18" fill="#c9c9c9" font-family="Liberation Serif,serif" font-weight="bold"><text x="2" y="14" font-size="15">T</text><text x="12" y="17" font-size="6">1</text></svg><svg style="left:165px;top:176px" width="20" height="18" fill="#c9c9c9" font-family="Liberation Serif,serif" font-weight="bold"><text x="10" y="14" font-size="15" text-anchor="middle">T</text><rect x="5" y="16" width="10" height="1"/></svg><svg style="left:189px;top:176px" width="20" height="18" fill="#c9c9c9" font-family="Liberation Serif,serif" font-weight="bold"><text x="10" y="15" font-size="15" text-anchor="middle">T</text><rect x="4" y="9" width="12" height="1"/></svg><div class="seph" style="left:0;top:201px;width:230px"></div><svg style="left:21px;top:208px" width="20" height="18" fill="#878787" font-family="Liberation Serif,serif" font-weight="bold"><text x="10" y="15" font-size="16" text-anchor="middle">fi</text></svg><svg style="left:45px;top:208px" width="20" height="18" fill="#878787" font-family="Liberation Serif,serif" font-weight="bold"><text x="10" y="15" font-size="16" font-style="italic" text-anchor="middle">&#x3c3;</text></svg><svg style="left:69px;top:208px" width="20" height="18" fill="#878787" font-family="Liberation Serif,serif" font-weight="bold"><text x="10" y="15" font-size="15" text-anchor="middle">st</text></svg><svg style="left:93px;top:208px" width="20" height="18" fill="#878787" font-family="Liberation Serif,serif" font-weight="bold"><text x="10" y="15" font-size="16" font-style="italic" text-anchor="middle">A</text></svg><svg style="left:117px;top:208px" width="20" height="18" fill="#878787" font-family="Liberation Serif,serif" font-weight="bold"><text x="10" y="16" font-size="14" text-anchor="middle">aa</text><path d="M3 5.5 L17 5.5 M14 3.5 L17 5.5 L14 7.5" stroke="#878787" fill="none"/></svg><svg style="left:141px;top:208px" width="20" height="18" fill="#878787" font-family="Liberation Serif,serif" font-weight="bold"><text x="10" y="15" font-size="16" font-style="italic" text-anchor="middle">T</text></svg><svg style="left:165px;top:208px" width="20" height="18" fill="#878787" font-family="Liberation Serif,serif" font-weight="bold"><text x="2" y="15" font-size="15">1</text><text x="9" y="10" font-size="8">st</text></svg><svg style="left:189px;top:208px" width="20" height="18" fill="#878787" font-family="Liberation Serif,serif" font-weight="bold"><text x="10" y="15" font-size="15" text-anchor="middle">&#189;</text></svg><div class="seph" style="left:0;top:233px;width:230px"></div><div class="btn" style="left:8px;top:239px;width:121px;height:20px"><div class="t" style="left:6px;top:1px">English: USA</div><svg style="left:109px;top:5px" width="6" height="9"><path d="M0 3.5 L3 0.5 L6 3.5 Z M0 5.5 L3 8.5 L6 5.5 Z" fill="#f0f0f0"/></svg></div><svg style="left:134px;top:241px" width="16" height="16" font-family="Liberation Sans,sans-serif" fill="#d0d0d0"><text x="0" y="9" font-size="8">a</text><text x="6" y="13" font-size="12">a</text></svg><div class="btn" style="left:155px;top:239px;width:69px;height:20px"><div class="t" style="left:7px;top:1px">Sharp</div><svg style="left:57px;top:5px" width="6" height="9"><path d="M0 3.5 L3 0.5 L6 3.5 Z M0 5.5 L3 8.5 L6 5.5 Z" fill="#f0f0f0"/></svg></div></div><div class="panel" style="left:1429px;top:76px;width:211px;height:141px;box-shadow:0 0 0 1px #2e2e2e,-1px 2px 4px rgba(0,0,0,.5)"><div class="tabstrip" style="left:0;top:0;width:211px;height:17px"><div class="tab on" style="left:0;width:53px">History</div></div><svg style="left:170px;top:5px" width="9" height="7"><path d="M0 0 L4 3.5 L0 7 Z M4.5 0 L8.5 3.5 L4.5 7 Z" fill="#d8d8d8"/></svg><div class="a" style="left:185px;top:3px;width:3px;height:11px;border-left:1px solid #6a6a6a;border-right:1px solid #6a6a6a"></div><svg style="left:192px;top:5px" width="15" height="8"><path d="M0 1.5 L5 1.5 L2.5 4.5 Z" fill="#d8d8d8"/><path d="M6 0.5 L15 0.5 M6 2.5 L15 2.5 M6 4.5 L15 4.5 M6 6.5 L15 6.5" stroke="#d8d8d8"/></svg><div class="a" style="left:0;top:17px;width:194px;height:98px;background:#4a4a4a"></div><div class="a" style="left:0;top:17px;width:194px;height:26px;background:#535353;border-bottom:1px solid #3a3a3a"></div><div class="a" style="left:0;top:44px;width:194px;height:1px;background:#5e5e5e"></div><svg style="left:4px;top:22px" width="16" height="16"><path d="M14 2 L7 10" stroke="#d0d0d0" stroke-width="1.8" stroke-linecap="round"/><path d="M2 14 C5 14 5 11 7 10 L9 12 C9 14 6 15.5 2 14 Z" fill="#d0d0d0"/><path d="M2 5 C4 2 8 2 10 3.5" fill="none" stroke="#d0d0d0" stroke-width="1.2"/><path d="M1 3 L5 4 L2.5 7 Z" fill="#d0d0d0"/></svg><div class="a" style="left:25px;top:23px;width:32px;height:15px;background:#000;border:1px solid #000"><svg style="left:0;top:0" width="30" height="13"><use href="#photo" width="30" height="13"/></svg></div><div class="t" style="left:63px;top:22px;color:#f0f0f0">201709a-1000-1.gif</div><div class="a" style="left:0;top:46px;width:194px;height:22px;background:#596678"></div><div class="a" style="left:6px;top:51px;width:12px;height:12px;border:1px solid #46505e;background:#55627a"></div><svg style="left:32px;top:48px" width="15" height="17"><path d="M0.5 1.5 L9 1.5 L9 0.5 L14.5 0.5 L14.5 16.5 L0.5 16.5 Z" fill="#6f7a8a" stroke="#e0e0e0"/><path d="M3 6.5 L12 6.5 M3 8.5 L12 8.5 M3 10.5 L12 10.5 M3 12.5 L12 12.5 M3 14.5 L12 14.5" stroke="#e8e8e8"/></svg><div class="t" style="left:59px;top:49px;color:#f4f4f4;letter-spacing:.4px">Open</div><div class="a" style="left:0;top:115px;width:211px;height:19px;background:#535353;border-top:1px solid #3c3c3c;box-shadow:inset 0 1px 0 #5e5e5e"></div><svg style="left:108px;top:118px" width="15" height="13"><path d="M5 3 L5 0.5 L11 0.5 L14 3.5 L14 9 L9 9" fill="#b8b8b8" stroke="#d8d8d8"/><path d="M0 8 L8 8 M4 4 L4 12" stroke="#e4e4e4" stroke-width="2"/></svg><svg style="left:139px;top:119px" width="15" height="11"><path d="M0 2.5 L4 2.5 L5 0.5 L10 0.5 L11 2.5 L15 2.5 L15 11 L0 11 Z" fill="#d0d0d0"/><circle cx="7.5" cy="6.5" r="3" fill="#535353"/><circle cx="7.5" cy="6.5" r="1.7" fill="#cfcfcf"/></svg><svg style="left:169px;top:117px" width="12" height="14"><path d="M0 3.5 L12 3.5 M4 3 L4 1 L8 1 L8 3" stroke="#d0d0d0" fill="none" stroke-width="1.3"/><path d="M1.5 5 L10.5 5 L9.5 13.5 L2.5 13.5 Z" fill="#d0d0d0"/><path d="M4 6 L4.3 12.5 M6 6 L6 12.5 M8 6 L7.7 12.5" stroke="#535353" stroke-width=".8"/></svg><svg style="left:199px;top:122px" width="10" height="10"><path d="M9 0 L9 9 L0 9 Z" fill="none" stroke="#777" stroke-dasharray="1 1"/><path d="M9 3 L3 9 M9 6 L6 9" stroke="#777" stroke-dasharray="1 1"/></svg><div class="a" style="left:0;top:134px;width:211px;height:7px;background:#4a4a4a;border-top:1px solid #3c3c3c"></div><div class="a" style="left:95px;top:136px;width:19px;height:3px;background:repeating-linear-gradient(90deg,#2f2f2f 0 1px,#666 1px 2px)"></div></div>
<div class="a" style="left:1639px;top:62px;width:281px;height:964px;background:#333"></div><div class="a" style="left:1641px;top:62px;width:279px;height:13px;background:#3a3a3a;border-top:1px solid #2e2e2e"></div><svg style="left:1667px;top:65px" width="9" height="7"><path d="M4 0 L0 3.5 L4 7 Z M8.5 0 L4.5 3.5 L8.5 7 Z" fill="#d8d8d8"/></svg><svg style="left:1908px;top:65px" width="9" height="7"><path d="M0 0 L4 3.5 L0 7 Z M4.5 0 L8.5 3.5 L4.5 7 Z" fill="#d8d8d8"/></svg><div class="panel dock" style="left:1641px;top:75px;width:38px;height:951px;border-right:1px solid #3a3a3a;border-left:1px solid #484848"><div class="a" style="left:8px;top:5px;width:20px;height:3px;background:repeating-linear-gradient(90deg,#333 0 1px,#666 1px 2px)"></div><div class="a" style="left:3px;top:11px;width:30px;height:24px;background:#3a3a3a;border:1px solid #2e2e2e;border-radius:3px;box-shadow:0 1px 0 #636363"></div><svg class="ns" style="left:11px;top:14px" width="16" height="20"><rect x="1" y="1" width="4" height="4" fill="none" stroke="#c4c4c4" stroke-width="1.2"/><rect x="1" y="7.5" width="4" height="4" fill="none" stroke="#c4c4c4" stroke-width="1.2"/><rect x="0.4" y="13.5" width="5.2" height="5.2" fill="#c4c4c4"/><path d="M9 16.5 C14.5 13 14.5 6 10 4" fill="none" stroke="#c4c4c4" stroke-width="2"/><path d="M7 4.2 L12 0.8 L12.3 7 Z" fill="#c4c4c4"/></svg><div class="seph" style="left:0;top:40px;width:37px;background:#383838"></div><div class="a" style="left:8px;top:46px;width:20px;height:3px;background:repeating-linear-gradient(90deg,#333 0 1px,#666 1px 2px)"></div><svg style="left:8px;top:53px" width="22" height="22"><line x1="11" y1="11" x2="21.5" y2="11.0" stroke="#c4c4c4" stroke-width="1.4"/><line x1="11" y1="11" x2="18.4" y2="18.4" stroke="#c4c4c4" stroke-width="1.4"/><line x1="11" y1="11" x2="11.0" y2="21.5" stroke="#c4c4c4" stroke-width="1.4"/><line x1="11" y1="11" x2="3.6" y2="18.4" stroke="#c4c4c4" stroke-width="1.4"/><line x1="11" y1="11" x2="0.5" y2="11.0" stroke="#c4c4c4" stroke-width="1.4"/><line x1="11" y1="11" x2="3.6" y2="3.6" stroke="#c4c4c4" stroke-width="1.4"/><line x1="11" y1="11" x2="11.0" y2="0.5" stroke="#c4c4c4" stroke-width="1.4"/><line x1="11" y1="11" x2="18.4" y2="3.6" stroke="#c4c4c4" stroke-width="1.4"/><circle cx="11" cy="11" r="6.5" fill="none" stroke="#c4c4c4" stroke-width="1.6"/><circle cx="11" cy="11" r="2" fill="#c4c4c4"/></svg><svg style="left:8px;top:84px" width="22" height="16"><path d="M0 16 L0 11 L3 8 L5 10 L7 3 L9 6 L11 0 L13 5 L15 3 L17 8 L19 7 L22 13 L22 16 Z" fill="#c4c4c4"/></svg><div class="seph" style="left:0;top:109px;width:37px;background:#383838"></div><div class="a" style="left:8px;top:115px;width:20px;height:3px;background:repeating-linear-gradient(90deg,#333 0 1px,#666 1px 2px)"></div><svg style="left:8px;top:121px" width="22" height="22"><path d="M1 4 L7 1 L13 4 L13 11 L7 14 L1 11 Z" fill="#8a8a8a" stroke="#c4c4c4" stroke-width="1.3"/><path d="M1 4 L7 7 L13 4 M7 7 L7 14" stroke="#c4c4c4" stroke-width="1.2" fill="none"/><rect x="16" y="1" width="5" height="5" fill="#c4c4c4"/><rect x="16" y="8" width="5" height="5" fill="#c4c4c4"/><rect x="1" y="17" width="20" height="4" fill="#c4c4c4"/><path d="M14 18 L19 18 L16.5 20.5 Z" fill="#333"/></svg><div class="seph" style="left:0;top:150px;width:37px;background:#383838"></div><div class="a" style="left:8px;top:156px;width:20px;height:3px;background:repeating-linear-gradient(90deg,#333 0 1px,#666 1px 2px)"></div><svg style="left:9px;top:161px" width="22" height="26"><path d="M4 14 L16 14 L15 25 L5 25 Z" fill="#c4c4c4"/><path d="M7 14 L5 8 M10 14 L10 6 M13 14 L16 8" stroke="#c4c4c4" stroke-width="1.6"/><path d="M2 2 C6 3 7 6 5.5 9 C3 8 2 5 2 2 Z M10 0 C12 2 12 5 10 7 C8 5 8 2 10 0 Z M19 3 C19 6 18 8 15.5 9 C14 6 16 4 19 3 Z" fill="#c4c4c4"/></svg><svg style="left:7px;top:192px" width="24" height="22"><path d="M1 1 C5 0 9 2 9 5 C6 8 2 6 1 1 Z" fill="#c4c4c4"/><path d="M8 4.5 L23 4.5" stroke="#c4c4c4" stroke-width="2"/><path d="M1 15 L14 15" stroke="#c4c4c4" stroke-width="2"/><path d="M13 15 L21 9 C24 12 24 18 21 21 Z" fill="#c4c4c4"/></svg><div class="seph" style="left:0;top:219px;width:37px;background:#383838"></div></div>
<div class="panel" style="left:1681px;top:75px;width:239px;height:130px"><div class="tabstrip" style="left:0;top:0;width:239px;height:17px"><div class="tab on" style="left:0;width:43px">Color</div><div class="tab" style="left:43px;width:63px">Swatches</div><svg style="right:5px;top:5px" width="15" height="8"><path d="M0 1.5 L5 1.5 L2.5 4.5 Z" fill="#d8d8d8"/><path d="M6 0.5 L15 0.5 M6 2.5 L15 2.5 M6 4.5 L15 4.5 M6 6.5 L15 6.5" stroke="#d8d8d8"/></svg></div><div class="a" style="left:15px;top:38px;width:19px;height:19px;background:#f00;border:1px solid #fff;box-shadow:0 0 0 1px #333"></div><div class="a" style="left:5px;top:28px;width:20px;height:20px;background:#f00;border:1px solid #fff;box-shadow:0 0 0 1px #2a2a2a,0 0 0 2px #8a8a8a"></div><div class="t" style="left:43px;top:29px;font-size:11px">R</div><div class="a" style="left:59px;top:30px;width:82px;height:6px;background:linear-gradient(90deg,#000,#f00);border:1px solid #3a3a3a;border-bottom-color:#666"></div><svg style="left:134.5px;top:35px" width="11" height="10"><path d="M5.5 0.5 L10.5 6 L10.5 9.5 L0.5 9.5 L0.5 6 Z" fill="#a4a4a4" stroke="#3a3a3a" stroke-width="1"/><path d="M5.5 1.8 L9.5 6.3 L1.5 6.3 Z" fill="#bdbdbd"/></svg><div class="fld" style="left:146px;top:28px;width:51px;height:20px"><div class="t" style="left:3px;top:2px">255</div></div><div class="t" style="left:43px;top:54px;font-size:11px">G</div><div class="a" style="left:59px;top:55px;width:82px;height:6px;background:linear-gradient(90deg,#f00,#ff0);border:1px solid #3a3a3a;border-bottom-color:#666"></div><svg style="left:54.5px;top:60px" width="11" height="10"><path d="M5.5 0.5 L10.5 6 L10.5 9.5 L0.5 9.5 L0.5 6 Z" fill="#a4a4a4" stroke="#3a3a3a" stroke-width="1"/><path d="M5.5 1.8 L9.5 6.3 L1.5 6.3 Z" fill="#bdbdbd"/></svg><div class="fld" style="left:146px;top:53px;width:51px;height:20px"><div class="t" style="left:3px;top:2px">0</div></div><div class="t" style="left:43px;top:79px;font-size:11px">B</div><div class="a" style="left:59px;top:80px;width:82px;height:6px;background:linear-gradient(90deg,#f00,#f0f);border:1px solid #3a3a3a;border-bottom-color:#666"></div><svg style="left:54.5px;top:85px" width="11" height="10"><path d="M5.5 0.5 L10.5 6 L10.5 9.5 L0.5 9.5 L0.5 6 Z" fill="#a4a4a4" stroke="#3a3a3a" stroke-width="1"/><path d="M5.5 1.8 L9.5 6.3 L1.5 6.3 Z" fill="#bdbdbd"/></svg><div class="fld" style="left:146px;top:78px;width:51px;height:20px"><div class="t" style="left:3px;top:2px">0</div></div><svg style="left:11px;top:82px" width="13" height="12"><path d="M6.5 0.5 L12.5 11.5 L0.5 11.5 Z" fill="#d8d8d8"/><path d="M6.5 4 L6.5 8 M6.5 9 L6.5 10.5" stroke="#222" stroke-width="1.6"/></svg><div class="a" style="left:27px;top:82px;width:13px;height:13px;background:#e8201c;border:1px solid #fff"></div><div class="a" style="left:6px;top:108px;width:200px;height:16px;border:1px solid #3a3a3a;background:linear-gradient(#fff 0%,rgba(255,255,255,0) 42%,rgba(0,0,0,0) 42%,rgba(0,0,0,.55) 72%,#000 100%),linear-gradient(90deg,#f00 0%,#ff0 14%,#0b3 30%,#0bf 47%,#01c 63%,#d0c 80%,#f01 100%)"></div><div class="a" style="left:197px;top:109px;width:8px;height:7px;background:#fff"></div><div class="a" style="left:197px;top:116px;width:8px;height:7px;background:#000"></div></div><div class="panel" style="left:1681px;top:207px;width:239px;height:129px"><div class="tabstrip" style="left:0;top:0;width:239px;height:17px"><div class="tab on" style="left:0;width:80px">Adjustments</div><div class="tab" style="left:80px;width:45px">Styles</div><svg style="right:5px;top:5px" width="15" height="8"><path d="M0 1.5 L5 1.5 L2.5 4.5 Z" fill="#d8d8d8"/><path d="M6 0.5 L15 0.5 M6 2.5 L15 2.5 M6 4.5 L15 4.5 M6 6.5 L15 6.5" stroke="#d8d8d8"/></svg></div><div class="t b" style="left:9px;top:23px;font-size:11.7px;color:#f4f4f4">Add an adjustment</div><svg style="left:47px;top:47px" width="18" height="16"><line x1="14.5" y1="8.0" x2="17.5" y2="8.0" stroke="#cdcdcd" stroke-width="1.6"/><line x1="12.9" y1="11.9" x2="15.0" y2="14.0" stroke="#cdcdcd" stroke-width="1.6"/><line x1="9.0" y1="13.5" x2="9.0" y2="16.5" stroke="#cdcdcd" stroke-width="1.6"/><line x1="5.1" y1="11.9" x2="3.0" y2="14.0" stroke="#cdcdcd" stroke-width="1.6"/><line x1="3.5" y1="8.0" x2="0.5" y2="8.0" stroke="#cdcdcd" stroke-width="1.6"/><line x1="5.1" y1="4.1" x2="3.0" y2="2.0" stroke="#cdcdcd" stroke-width="1.6"/><line x1="9.0" y1="2.5" x2="9.0" y2="-0.5" stroke="#cdcdcd" stroke-width="1.6"/><line x1="12.9" y1="4.1" x2="15.0" y2="2.0" stroke="#cdcdcd" stroke-width="1.6"/><circle cx="9" cy="8" r="3.6" fill="none" stroke="#cdcdcd" stroke-width="1.4"/><path d="M9 4.4 A3.6 3.6 0 0 1 9 11.6 Z" fill="#cdcdcd"/></svg><svg style="left:72px;top:47px" width="18" height="16"><path d="M0 14 L0 6 L2 9 L3.5 3 L5 8 L7 1 L9 7 L10.5 0.5 L12 7 L14 2 L15.5 8 L17 4 L18 8 L18 14 Z" fill="#cdcdcd"/></svg><svg style="left:96px;top:47px" width="18" height="16"><rect x="1.5" y="2.5" width="15" height="12" fill="#777" stroke="#cdcdcd"/><path d="M1.5 6.5 L16.5 6.5 M1.5 10.5 L16.5 10.5 M6.5 2.5 L6.5 14.5 M11.5 2.5 L11.5 14.5" stroke="#cdcdcd" stroke-width=".8"/><path d="M2 14 C9 14 9 3 16 3" fill="none" stroke="#f0f0f0" stroke-width="1.4"/></svg><svg style="left:120px;top:47px" width="18" height="16"><rect x="1.5" y="2.5" width="15" height="12" fill="#666" stroke="#cdcdcd"/><path d="M16.5 2.5 L16.5 14.5 L1.5 14.5 Z" fill="#cdcdcd"/><path d="M3.5 6.5 L8 6.5 M5.75 4.3 L5.75 8.7" stroke="#cdcdcd" stroke-width="1.2"/><path d="M10 11.5 L14 11.5" stroke="#444" stroke-width="1.3"/></svg><svg style="left:144px;top:47px" width="18" height="16"><path d="M1 1 L17 1 L9 15 Z" fill="#8a8a8a" stroke="#cdcdcd" stroke-width="1.2"/></svg><svg style="left:36px;top:74px" width="18" height="16"><rect x="1.5" y="2.5" width="15" height="12" fill="#666" stroke="#cdcdcd"/><rect x="2" y="3" width="14" height="5" fill="#cdcdcd"/><path d="M5 3 L5 8 M8 3 L8 8 M11 3 L11 8 M14 3 L14 8" stroke="#666"/><rect x="2" y="9" width="14" height="5" fill="#999"/></svg><svg style="left:60px;top:74px" width="18" height="16"><path d="M9 1 L9 4 M2.5 4.5 L15.5 4.5" stroke="#cdcdcd" stroke-width="1.6"/><path d="M3.5 5 L1 12 L6 12 Z M14.5 5 L12 12 L17 12 Z" fill="none" stroke="#cdcdcd" stroke-width="1"/><path d="M0.5 12 C1 15 6 15 6.5 12 Z M11.5 12 C12 15 17 15 17.5 12 Z" fill="#cdcdcd"/><path d="M6 0 L12 0 L9 3 Z" fill="#cdcdcd"/></svg><svg style="left:84px;top:74px" width="18" height="16"><rect x="1.5" y="2.5" width="15" height="12" fill="#c8c8c8" stroke="#cdcdcd"/><rect x="2" y="3" width="6" height="11" fill="#4a4a4a"/></svg><svg style="left:107px;top:74px" width="18" height="16"><path d="M0 3 L3 3 L4 1 L9 1 L10 3 L14 3 L14 11 L0 11 Z" fill="#cdcdcd"/><circle cx="7" cy="6.5" r="3" fill="#555"/><circle cx="12" cy="11" r="4.5" fill="#8a8a8a" stroke="#cdcdcd" stroke-width="1.2"/></svg><svg style="left:132px;top:74px" width="18" height="16"><circle cx="9" cy="5.5" r="4.6" fill="#cdcdcd"/><circle cx="5.2" cy="11" r="4.6" fill="#bdbdbd"/><circle cx="12.8" cy="11" r="4.6" fill="#bdbdbd"/><path d="M9 6 L6.5 9.5 L9 12 L11.5 9.5 Z" fill="#555"/></svg><svg style="left:156px;top:74px" width="18" height="16"><rect x="1.5" y="2.5" width="15" height="12" fill="#777" stroke="#cdcdcd"/><path d="M1.5 6.5 L16.5 6.5 M1.5 10.5 L16.5 10.5 M6.5 2.5 L6.5 14.5 M11.5 2.5 L11.5 14.5" stroke="#cdcdcd" stroke-width="1.2"/></svg><svg style="left:48px;top:101px" width="18" height="16"><rect x="1.5" y="2.5" width="15" height="12" fill="#777" stroke="#cdcdcd"/><ellipse cx="9" cy="8.5" rx="5" ry="3.6" fill="#444" transform="rotate(-35 9 8.5)"/><path d="M2 14 L16 3" stroke="#cdcdcd" stroke-width="1"/></svg><svg style="left:72px;top:101px" width="18" height="16"><rect x="1.5" y="2.5" width="15" height="12" fill="#8a8a8a" stroke="#cdcdcd"/><path d="M2 11 L12 3 L16 3 L16 5 L5 14 L2 14 Z" fill="#c4c4c4" opacity=".8"/><path d="M9 14 L16 8 L16 11 L12 14 Z" fill="#666"/></svg><svg style="left:96px;top:101px" width="18" height="16"><rect x="1.5" y="2.5" width="15" height="12" fill="#8a8a8a" stroke="#cdcdcd"/><path d="M2 12 L6 12 L6 9 L10 9 L10 6 L14 6 L14 4 L16 4 L16 8 L13 8 L13 10.5 L9 10.5 L9 13 L5 13 L5 14 L2 14 Z" fill="#333"/></svg><svg style="left:120px;top:101px" width="18" height="16"><rect x="1.5" y="2.5" width="15" height="12" fill="#9a9a9a" stroke="#cdcdcd"/><path d="M2 3 L16 14 M16 3 L2 14" stroke="#cdcdcd" stroke-width="1"/><path d="M2 3 L9 8.5 L2 14 Z M16 3 L9 8.5 L16 14 Z" fill="#6a6a6a"/></svg><svg style="left:144px;top:101px" width="18" height="16"><defs><linearGradient id="gm" x1="0" x2="1"><stop offset="0" stop-color="#333"/><stop offset="1" stop-color="#ddd"/></linearGradient></defs><rect x="1.5" y="2.5" width="15" height="12" fill="url(#gm)" stroke="#cdcdcd"/></svg></div><div class="panel" style="left:1681px;top:339px;width:239px;height:687px"><div class="tabstrip" style="left:0;top:0;width:239px;height:17px"><div class="tab on" style="left:0;width:47px">Layers</div><div class="tab" style="left:47px;width:63px">Channels</div><div class="tab" style="left:110px;width:44px">Paths</div><svg style="right:5px;top:5px" width="15" height="8"><path d="M0 1.5 L5 1.5 L2.5 4.5 Z" fill="#d8d8d8"/><path d="M6 0.5 L15 0.5 M6 2.5 L15 2.5 M6 4.5 L15 4.5 M6 6.5 L15 6.5" stroke="#d8d8d8"/></svg></div><div class="btn" style="left:4px;top:21px;width:75px;height:20px"><svg style="left:6px;top:4px" width="11" height="11"><circle cx="6.5" cy="4.5" r="3.2" fill="none" stroke="#cfcfcf" stroke-width="1.4"/><path d="M4.2 6.8 L0.8 10.2" stroke="#cfcfcf" stroke-width="1.6"/></svg><div class="t" style="left:21px;top:1px">Kind</div><svg style="left:63px;top:5px" width="6" height="9"><path d="M0 3.5 L3 0.5 L6 3.5 Z M0 5.5 L3 8.5 L6 5.5 Z" fill="#f0f0f0"/></svg></div><svg style="left:89px;top:22px" width="16" height="16"><rect x="1.5" y="2.5" width="12" height="10" fill="none" stroke="#d0d0d0" stroke-width="1.2"/><path d="M3 11 L6 7 L8 9.5 L10 8 L12 11 Z" fill="#d0d0d0"/><circle cx="10.5" cy="5.5" r="1" fill="#d0d0d0"/></svg><svg style="left:113px;top:22px" width="16" height="16"><circle cx="8" cy="8" r="5" fill="none" stroke="#d0d0d0" stroke-width="1.3"/><path d="M4.5 11.5 A5 5 0 0 0 11.5 4.5 Z" fill="#d0d0d0"/></svg><svg style="left:137px;top:22px" width="16" height="16"><text x="8" y="13.5" font-family="Liberation Serif,serif" font-size="16" font-weight="bold" text-anchor="middle" fill="#d0d0d0">T</text></svg><svg style="left:161px;top:22px" width="16" height="16"><rect x="3.5" y="3.5" width="9" height="9" fill="none" stroke="#d0d0d0" stroke-width="1.2"/><rect x="1.5" y="1.5" width="3" height="3" fill="#535353" stroke="#d0d0d0"/><rect x="11.5" y="1.5" width="3" height="3" fill="#535353" stroke="#d0d0d0"/><rect x="1.5" y="11.5" width="3" height="3" fill="#535353" stroke="#d0d0d0"/><rect x="11.5" y="11.5" width="3" height="3" fill="#535353" stroke="#d0d0d0"/></svg><svg style="left:185px;top:22px" width="16" height="16"><path d="M5.5 2.5 L10 2.5 L13.5 6 L13.5 13.5 L5.5 13.5 Z" fill="none" stroke="#d0d0d0" stroke-width="1.2"/><path d="M10 2.5 L10 6 L13.5 6" fill="none" stroke="#d0d0d0"/><rect x="2" y="8" width="6" height="6" fill="#d0d0d0"/></svg><div class="a" style="left:214px;top:23px;width:9px;height:16px;border:1px solid #3a3a3a;border-radius:1px;background:linear-gradient(#9a9a9a 0 45%,#444 45% 100%)"></div><div class="seph" style="left:0;top:45px;width:239px"></div><div class="btn" style="left:4px;top:49px;width:111px;height:20px"><div class="t" style="left:7px;top:1px">Normal</div><svg style="left:100px;top:5px" width="6" height="9"><path d="M0 3.5 L3 0.5 L6 3.5 Z M0 5.5 L3 8.5 L6 5.5 Z" fill="#f0f0f0"/></svg></div><div class="t" style="left:120px;top:51px">Opacity:</div><div class="fld" style="left:168px;top:49px;width:37px;height:20px;border-right:none"><div class="t" style="left:3px;top:2px">100%</div></div><div class="btn" style="left:204px;top:49px;width:20px;height:20px;border-radius:0 3px 3px 0"><svg style="left:6px;top:8px" width="7" height="4"><path d="M0 0 L7 0 L3.5 4 Z" fill="#eee"/></svg></div><div class="seph" style="left:0;top:73px;width:239px"></div><div class="t" style="left:6px;top:79px">Unify:</div><svg style="left:39px;top:78px" width="17" height="16"><path d="M6 1 L11 5 L9 6 L8 9 L2 4 L5 3 Z" fill="#d0d0d0"/><path d="M5.5 7 L1 12" stroke="#d0d0d0" stroke-width="1.2"/><path d="M9.5 12.5 L13 12.5" stroke="#d0d0d0" stroke-width="1"/><rect x="7.5" y="10.5" width="5" height="4" rx="2" fill="none" stroke="#d0d0d0"/><rect x="11" y="10.5" width="5" height="4" rx="2" fill="none" stroke="#d0d0d0"/></svg><svg style="left:61px;top:78px" width="17" height="16"><path d="M0.5 6.5 C3 2 10 2 12.5 6.5 C10 11 3 11 0.5 6.5 Z" fill="none" stroke="#d0d0d0" stroke-width="1.1"/><circle cx="6.5" cy="6.3" r="2.2" fill="#d0d0d0"/><path d="M9.5 12.5 L13 12.5" stroke="#d0d0d0" stroke-width="1"/><rect x="7.5" y="10.5" width="5" height="4" rx="2" fill="none" stroke="#d0d0d0"/><rect x="11" y="10.5" width="5" height="4" rx="2" fill="none" stroke="#d0d0d0"/></svg><svg style="left:83px;top:78px" width="17" height="16"><text x="0" y="10" font-family="Liberation Serif,serif" font-style="italic" font-size="12" fill="#d0d0d0">fx</text><path d="M9.5 12.5 L13 12.5" stroke="#d0d0d0" stroke-width="1"/><rect x="7.5" y="10.5" width="5" height="4" rx="2" fill="none" stroke="#d0d0d0"/><rect x="11" y="10.5" width="5" height="4" rx="2" fill="none" stroke="#d0d0d0"/></svg><div class="a" style="left:109px;top:80px;width:14px;height:14px;border:1px solid #3c3c3c;border-radius:2px;background:linear-gradient(#666,#5a5a5a)"></div><svg style="left:110px;top:77px" width="14" height="15"><path d="M2.5 8 L6 12.5 L12.5 1.5" fill="none" stroke="#efefef" stroke-width="1.8"/></svg><div class="t" style="left:127px;top:80px">Propagate Frame 1</div><div class="seph" style="left:0;top:100px;width:239px"></div><div class="t" style="left:6px;top:106px">Lock:</div><svg style="left:39px;top:107px" width="16" height="16"><rect x="2.5" y="2.5" width="11" height="11" fill="#777" stroke="#d0d0d0"/><path d="M3 3 H6.5 V6.5 H3 Z M9.5 3 H13 V6.5 H9.5 Z M6.5 6.5 H9.5 V9.5 H6.5 Z M3 9.5 H6.5 V13 H3 Z M9.5 9.5 H13 V13 H9.5 Z" fill="#d0d0d0"/></svg><svg style="left:62px;top:107px" width="16" height="16"><path d="M15 1 L7 10" stroke="#d0d0d0" stroke-width="1.8" stroke-linecap="round"/><path d="M0 14 C4 14 4 10.5 7 9.5 L8.5 11 C8.5 14 5 15.5 0 14 Z" fill="#d0d0d0"/></svg><svg style="left:84px;top:107px" width="16" height="16"><path d="M8 1.5 L8 14.5 M1.5 8 L14.5 8" stroke="#d0d0d0" stroke-width="1.2"/><path d="M8 0 L10.5 3 L5.5 3 Z M8 16 L10.5 13 L5.5 13 Z M0 8 L3 5.5 L3 10.5 Z M16 8 L13 5.5 L13 10.5 Z" fill="#d0d0d0"/></svg><svg style="left:106px;top:107px" width="16" height="16"><rect x="3" y="7" width="10" height="8" rx="1" fill="#d0d0d0"/><path d="M5 7 L5 5 C5 1 11 1 11 5 L11 7" fill="none" stroke="#d0d0d0" stroke-width="1.6"/><rect x="7.3" y="9.5" width="1.4" height="3" fill="#444"/></svg><div class="t" style="left:145px;top:107px">Fill:</div><div class="fld" style="left:168px;top:105px;width:37px;height:20px;border-right:none"><div class="t" style="left:3px;top:2px">100%</div></div><div class="btn" style="left:204px;top:105px;width:20px;height:20px;border-radius:0 3px 3px 0"><svg style="left:6px;top:8px" width="7" height="4"><path d="M0 0 L7 0 L3.5 4 Z" fill="#eee"/></svg></div><div class="seph" style="left:0;top:127px;width:239px"></div><div class="a" style="left:0;top:129px;width:223px;height:538px;background:#474747"></div><div class="a" style="left:0;top:129px;width:223px;height:22px;background:#535353;border-bottom:1px solid #3e3e3e"></div><div class="a" style="left:30px;top:129px;width:1px;height:21px;background:#434343"></div><div class="a" style="left:9px;top:133px;width:12px;height:12px;border:1px solid #3e3e3e;background:#515151;box-shadow:inset 0 0 0 1px #5c5c5c"></div><div class="a" style="left:34px;top:132px;width:32px;height:15px;background:#000;border:1px solid #000"><svg style="left:0;top:0" width="30" height="13"><use href="#photo" width="30" height="13"/></svg></div><div class="t" style="left:76px;top:133px;color:#f2f2f2">Layer 6</div><div class="a" style="left:0;top:151px;width:223px;height:22px;background:#535353;border-bottom:1px solid #3e3e3e"></div><div class="a" style="left:30px;top:151px;width:1px;height:21px;background:#434343"></div><div class="a" style="left:9px;top:155px;width:12px;height:12px;border:1px solid #3e3e3e;background:#515151;box-shadow:inset 0 0 0 1px #5c5c5c"></div><div class="a" style="left:34px;top:154px;width:32px;height:15px;background:#000;border:1px solid #000"><svg style="left:0;top:0" width="30" height="13"><use href="#photo" width="30" height="13"/></svg></div><div class="t" style="left:76px;top:155px;color:#f2f2f2">Layer 5</div><div class="a" style="left:0;top:173px;width:223px;height:22px;background:#535353;border-bottom:1px solid #3e3e3e"></div><div class="a" style="left:30px;top:173px;width:1px;height:21px;background:#434343"></div><div class="a" style="left:9px;top:177px;width:12px;height:12px;border:1px solid #3e3e3e;background:#515151;box-shadow:inset 0 0 0 1px #5c5c5c"></div><div class="a" style="left:34px;top:176px;width:32px;height:15px;background:#000;border:1px solid #000"><svg style="left:0;top:0" width="30" height="13"><use href="#photo" width="30" height="13"/></svg></div><div class="t" style="left:76px;top:177px;color:#f2f2f2">Layer 4</div><div class="a" style="left:0;top:195px;width:223px;height:22px;background:#535353;border-bottom:1px solid #3e3e3e"></div><div class="a" style="left:30px;top:195px;width:1px;height:21px;background:#434343"></div><div class="a" style="left:9px;top:199px;width:12px;height:12px;border:1px solid #3e3e3e;background:#515151;box-shadow:inset 0 0 0 1px #5c5c5c"></div><div class="a" style="left:34px;top:198px;width:32px;height:15px;background:#000;border:1px solid #000"><svg style="left:0;top:0" width="30" height="13"><use href="#photo" width="30" height="13"/></svg></div><div class="t" style="left:76px;top:199px;color:#f2f2f2">Layer 3</div><div class="a" style="left:0;top:217px;width:223px;height:22px;background:#535353;border-bottom:1px solid #3e3e3e"></div><div class="a" style="left:30px;top:217px;width:1px;height:21px;background:#434343"></div><div class="a" style="left:9px;top:221px;width:12px;height:12px;border:1px solid #3e3e3e;background:#515151;box-shadow:inset 0 0 0 1px #5c5c5c"></div><div class="a" style="left:34px;top:220px;width:32px;height:15px;background:#000;border:1px solid #000"><svg style="left:0;top:0" width="30" height="13"><use href="#photo" width="30" height="13"/></svg></div><div class="t" style="left:76px;top:221px;color:#f2f2f2">Layer 2</div><div class="a" style="left:0;top:239px;width:223px;height:22px;background:#535353;border-bottom:1px solid #3e3e3e"></div><div class="a" style="left:31px;top:239px;width:192px;height:21px;background:#596678"></div><div class="a" style="left:30px;top:239px;width:1px;height:21px;background:#434343"></div><svg style="left:9px;top:245px" width="13" height="9"><path d="M0.5 4.5 C3 0.5 10 0.5 12.5 4.5 C10 8.5 3 8.5 0.5 4.5 Z" fill="#535353" stroke="#e0e0e0" stroke-width="1.1"/><circle cx="6.5" cy="4.3" r="2.3" fill="#e0e0e0"/></svg><svg style="left:32px;top:240px" width="36" height="19"><path d="M0.5 5 L0.5 0.5 L11 0.5 M25 0.5 L35.5 0.5 L35.5 5 M35.5 14 L35.5 18.5 L25 18.5 M11 18.5 L0.5 18.5 L0.5 14" fill="none" stroke="#fff"/></svg><div class="a" style="left:34px;top:242px;width:32px;height:15px;background:#000;border:1px solid #000"><svg style="left:0;top:0" width="30" height="13"><use href="#photo" width="30" height="13"/></svg></div><div class="t" style="left:76px;top:243px;color:#f2f2f2">Layer 1</div><div class="a" style="left:0;top:667px;width:239px;height:20px;border-top:1px solid #3c3c3c;box-shadow:inset 0 1px 0 #5e5e5e"></div><svg style="left:34px;top:671px" width="16" height="15"><rect x="1" y="4" width="8" height="6" rx="3" fill="none" stroke="#9a9a9a" stroke-width="1.4"/><rect x="7" y="4" width="8" height="6" rx="3" fill="none" stroke="#9a9a9a" stroke-width="1.4"/></svg><svg style="left:61px;top:671px" width="18" height="15"><text x="0" y="11" font-family="Liberation Serif,serif" font-style="italic" font-size="14" fill="#d0d0d0">fx</text><path d="M13 12 L17 12 L15 14.5 Z" fill="#d0d0d0"/></svg><svg style="left:88px;top:671px" width="16" height="15"><rect x="1" y="2" width="14" height="11" fill="#d0d0d0"/><circle cx="8" cy="7.5" r="3" fill="#4a4a4a"/></svg><svg style="left:115px;top:671px" width="19" height="15"><circle cx="7" cy="7" r="5.3" fill="none" stroke="#d0d0d0" stroke-width="1.4"/><path d="M3.2 10.8 A5.3 5.3 0 0 0 10.8 3.2 Z" fill="#d0d0d0"/><path d="M14 12 L18 12 L16 14.5 Z" fill="#d0d0d0"/></svg><svg style="left:142px;top:671px" width="16" height="15"><path d="M1 2 L6 2 L7.5 4 L14 4 L14 13 L1 13 Z" fill="#d0d0d0"/></svg><svg style="left:169px;top:671px" width="16" height="15"><path d="M3 2 L14 2 L14 13 L8 13 L3 8 Z" fill="#d0d0d0"/><path d="M3 8 L8 8 L8 13 Z" fill="#777"/></svg><svg style="left:195px;top:671px" width="16" height="15"><path d="M2 3.5 L14 3.5 M6 3 L6 1 L10 1 L10 3" stroke="#d0d0d0" fill="none" stroke-width="1.3"/><path d="M3.5 5 L12.5 5 L11.5 14 L4.5 14 Z" fill="#d0d0d0"/><path d="M6 6 L6.3 13 M8 6 L8 13 M10 6 L9.7 13" stroke="#535353" stroke-width=".8"/></svg></div>
<div class="a" style="left:39px;top:918px;width:1602px;height:108px;background:#343434"></div><div class="panel" style="left:42px;top:923px;width:1592px;height:99px;background:#464646"><div class="tabstrip" style="left:0;top:0;width:1592px;height:15px;background:#3c3c3c;border-bottom:1px solid #5a5a5a"><div class="tab" style="left:0;width:75px;padding-top:0;line-height:14px;border-bottom:1px solid #353535">Mini Bridge</div><div class="tab on" style="left:75px;width:60px;padding-top:0;line-height:14px;background:#4a4a4a;border-bottom:1px solid #4a4a4a">Timeline</div><svg style="right:0px;top:4px" width="15" height="8"><path d="M0 1.5 L5 1.5 L2.5 4.5 Z" fill="#d8d8d8"/><path d="M6 0.5 L15 0.5 M6 2.5 L15 2.5 M6 4.5 L15 4.5 M6 6.5 L15 6.5" stroke="#d8d8d8"/></svg></div><div class="a" style="left:0px;top:17px;width:51px;height:65px;background:#57647a;border-right:1px solid #3c3c3c"></div><div class="a" style="left:2px;top:20px;width:45px;height:46px;border:1px solid #fff"></div><div class="a" style="left:4px;top:22px;width:41px;height:42px;background:#555;border:1px solid #474747;box-shadow:inset -1px -1px 0 #626262"></div><div class="a" style="left:4px;top:22px;width:15px;height:14px;background:#595959;border:1px solid #474747;border-right-color:#6a6a6a;border-bottom-color:#6a6a6a"></div><div class="t b" style="left:7px;top:22px;font-size:11px;color:#fff">1</div><svg style="left:5px;top:35px" width="40" height="17"><use href="#photo" width="40" height="17"/></svg><svg style="left:6px;top:67px" width="12" height="12"><circle cx="9.5" cy="1.6" r="1.4" fill="#9aa3b1"/><circle cx="1.6" cy="5.5" r="1.4" fill="#9aa3b1" opacity=".8"/><circle cx="6.5" cy="5.5" r="1.4" fill="#9aa3b1" opacity=".9"/><circle cx="3.5" cy="9.5" r="1.4" fill="#9aa3b1" opacity=".8"/></svg><div class="a" style="left:28px;top:76px;width:2px;height:2px;background:#e0e0e0;box-shadow:3px 0 0 #e0e0e0,6px 0 0 #e0e0e0"></div><svg style="left:38px;top:72px" width="8" height="5"><path d="M0 0 L8 0 L4 4.5 Z" fill="#e8e8e8"/></svg><div class="a" style="left:52px;top:17px;width:51px;height:65px;background:#535353;border-right:1px solid #3c3c3c"></div><div class="a" style="left:56px;top:22px;width:41px;height:42px;background:#555;border:1px solid #474747;box-shadow:inset -1px -1px 0 #626262"></div><div class="a" style="left:56px;top:22px;width:15px;height:14px;background:#595959;border:1px solid #474747;border-right-color:#6a6a6a;border-bottom-color:#6a6a6a"></div><div class="t" style="left:59px;top:22px;font-size:11px;color:#fff">2</div><svg style="left:57px;top:35px" width="40" height="17"><use href="#photo" width="40" height="17"/></svg><svg style="left:58px;top:67px" width="12" height="12"><circle cx="9.5" cy="1.6" r="1.4" fill="#9a9a9a"/><circle cx="1.6" cy="5.5" r="1.4" fill="#9a9a9a" opacity=".8"/><circle cx="6.5" cy="5.5" r="1.4" fill="#9a9a9a" opacity=".9"/><circle cx="3.5" cy="9.5" r="1.4" fill="#9a9a9a" opacity=".8"/></svg><div class="a" style="left:80px;top:76px;width:2px;height:2px;background:#e0e0e0;box-shadow:3px 0 0 #e0e0e0,6px 0 0 #e0e0e0"></div><svg style="left:90px;top:72px" width="8" height="5"><path d="M0 0 L8 0 L4 4.5 Z" fill="#e8e8e8"/></svg><div class="a" style="left:104px;top:17px;width:51px;height:65px;background:#535353;border-right:1px solid #3c3c3c"></div><div class="a" style="left:108px;top:22px;width:41px;height:42px;background:#555;border:1px solid #474747;box-shadow:inset -1px -1px 0 #626262"></div><div class="a" style="left:108px;top:22px;width:15px;height:14px;background:#595959;border:1px solid #474747;border-right-color:#6a6a6a;border-bottom-color:#6a6a6a"></div><div class="t" style="left:111px;top:22px;font-size:11px;color:#fff">3</div><svg style="left:109px;top:35px" width="40" height="17"><use href="#photo" width="40" height="17"/></svg><svg style="left:110px;top:67px" width="12" height="12"><circle cx="9.5" cy="1.6" r="1.4" fill="#9a9a9a"/><circle cx="1.6" cy="5.5" r="1.4" fill="#9a9a9a" opacity=".8"/><circle cx="6.5" cy="5.5" r="1.4" fill="#9a9a9a" opacity=".9"/><circle cx="3.5" cy="9.5" r="1.4" fill="#9a9a9a" opacity=".8"/></svg><div class="a" style="left:132px;top:76px;width:2px;height:2px;background:#e0e0e0;box-shadow:3px 0 0 #e0e0e0,6px 0 0 #e0e0e0"></div><svg style="left:142px;top:72px" width="8" height="5"><path d="M0 0 L8 0 L4 4.5 Z" fill="#e8e8e8"/></svg><div class="a" style="left:156px;top:17px;width:51px;height:65px;background:#535353;border-right:1px solid #3c3c3c"></div><div class="a" style="left:160px;top:22px;width:41px;height:42px;background:#555;border:1px solid #474747;box-shadow:inset -1px -1px 0 #626262"></div><div class="a" style="left:160px;top:22px;width:15px;height:14px;background:#595959;border:1px solid #474747;border-right-color:#6a6a6a;border-bottom-color:#6a6a6a"></div><div class="t" style="left:163px;top:22px;font-size:11px;color:#fff">4</div><svg style="left:161px;top:35px" width="40" height="17"><use href="#photo" width="40" height="17"/></svg><svg style="left:162px;top:67px" width="12" height="12"><circle cx="9.5" cy="1.6" r="1.4" fill="#9a9a9a"/><circle cx="1.6" cy="5.5" r="1.4" fill="#9a9a9a" opacity=".8"/><circle cx="6.5" cy="5.5" r="1.4" fill="#9a9a9a" opacity=".9"/><circle cx="3.5" cy="9.5" r="1.4" fill="#9a9a9a" opacity=".8"/></svg><div class="a" style="left:184px;top:76px;width:2px;height:2px;background:#e0e0e0;box-shadow:3px 0 0 #e0e0e0,6px 0 0 #e0e0e0"></div><svg style="left:194px;top:72px" width="8" height="5"><path d="M0 0 L8 0 L4 4.5 Z" fill="#e8e8e8"/></svg><div class="a" style="left:208px;top:17px;width:51px;height:65px;background:#535353;border-right:1px solid #3c3c3c"></div><div class="a" style="left:212px;top:22px;width:41px;height:42px;background:#555;border:1px solid #474747;box-shadow:inset -1px -1px 0 #626262"></div><div class="a" style="left:212px;top:22px;width:15px;height:14px;background:#595959;border:1px solid #474747;border-right-color:#6a6a6a;border-bottom-color:#6a6a6a"></div><div class="t" style="left:215px;top:22px;font-size:11px;color:#fff">5</div><svg style="left:213px;top:35px" width="40" height="17"><use href="#photo" width="40" height="17"/></svg><svg style="left:214px;top:67px" width="12" height="12"><circle cx="9.5" cy="1.6" r="1.4" fill="#9a9a9a"/><circle cx="1.6" cy="5.5" r="1.4" fill="#9a9a9a" opacity=".8"/><circle cx="6.5" cy="5.5" r="1.4" fill="#9a9a9a" opacity=".9"/><circle cx="3.5" cy="9.5" r="1.4" fill="#9a9a9a" opacity=".8"/></svg><div class="a" style="left:236px;top:76px;width:2px;height:2px;background:#e0e0e0;box-shadow:3px 0 0 #e0e0e0,6px 0 0 #e0e0e0"></div><svg style="left:246px;top:72px" width="8" height="5"><path d="M0 0 L8 0 L4 4.5 Z" fill="#e8e8e8"/></svg><div class="a" style="left:260px;top:17px;width:51px;height:65px;background:#535353;border-right:1px solid #3c3c3c"></div><div class="a" style="left:264px;top:22px;width:41px;height:42px;background:#555;border:1px solid #474747;box-shadow:inset -1px -1px 0 #626262"></div><div class="a" style="left:264px;top:22px;width:15px;height:14px;background:#595959;border:1px solid #474747;border-right-color:#6a6a6a;border-bottom-color:#6a6a6a"></div><div class="t" style="left:267px;top:22px;font-size:11px;color:#fff">6</div><svg style="left:265px;top:35px" width="40" height="17"><use href="#photo" width="40" height="17"/></svg><svg style="left:266px;top:67px" width="12" height="12"><circle cx="9.5" cy="1.6" r="1.4" fill="#9a9a9a"/><circle cx="1.6" cy="5.5" r="1.4" fill="#9a9a9a" opacity=".8"/><circle cx="6.5" cy="5.5" r="1.4" fill="#9a9a9a" opacity=".9"/><circle cx="3.5" cy="9.5" r="1.4" fill="#9a9a9a" opacity=".8"/></svg><div class="a" style="left:288px;top:76px;width:2px;height:2px;background:#e0e0e0;box-shadow:3px 0 0 #e0e0e0,6px 0 0 #e0e0e0"></div><svg style="left:298px;top:72px" width="8" height="5"><path d="M0 0 L8 0 L4 4.5 Z" fill="#e8e8e8"/></svg><div class="a" style="left:0;top:82px;width:1592px;height:17px;background:linear-gradient(#333,#454545 60%,#4a4a4a)"></div><div class="a" style="left:1581px;top:83px;width:11px;height:16px;background:#535353"></div><div class="a" style="left:29px;top:83px;width:280px;height:16px;background:#535353;border:1px solid #404040;border-bottom:none"></div><div class="a" style="left:103px;top:83px;width:1px;height:16px;background:#404040"></div><div class="a" style="left:220px;top:83px;width:1px;height:16px;background:#404040"></div><div class="t" style="left:40px;top:85px;font-size:11px;color:#f0f0f0">Forever</div><svg style="left:91px;top:91px" width="7" height="5"><path d="M0 0 L7 0 L3.5 4.5 Z" fill="#c8c8c8"/></svg><svg style="left:110px;top:88px" width="16" height="9"><path d="M7 0 L7 9 L0 4.5 Z M15 0 L15 9 L8 4.5 Z" fill="#8a8a8a"/></svg><svg style="left:141px;top:87px" width="9" height="11"><path d="M9 0 L9 11 L0 5.5 Z" fill="#cfcfcf"/></svg><svg style="left:172px;top:87px" width="9" height="11"><path d="M0 0 L0 11 L9 5.5 Z" fill="#cfcfcf"/></svg><svg style="left:198px;top:88px" width="16" height="9"><path d="M0 0 L0 9 L7 4.5 Z M8 0 L8 9 L15 4.5 Z" fill="#cfcfcf"/></svg><svg style="left:228px;top:87px" width="15" height="12"><circle cx="2.5" cy="2.5" r="1.8" fill="#6f6f6f"/><circle cx="6" cy="5" r="2.3" fill="#7d7d7d"/><circle cx="10.5" cy="8.5" r="3" fill="#8a8a8a"/></svg><svg style="left:259px;top:87px" width="11" height="12"><path d="M0 0 L11 0 L11 12 L6 12 L0 6 Z" fill="#cfcfcf"/><path d="M0 6 L6 6 L6 12 Z" fill="#777"/></svg><svg style="left:287px;top:86px" width="12" height="13"><path d="M0 3.5 L12 3.5 M4 3 L4 1 L8 1 L8 3" stroke="#cfcfcf" fill="none" stroke-width="1.3"/><path d="M1.5 5 L10.5 5 L9.5 13 L2.5 13 Z" fill="#cfcfcf"/><path d="M4 6 L4.3 12 M6 6 L6 12 M8 6 L7.7 12" stroke="#535353" stroke-width=".8"/></svg></div><div class="a" style="left:37px;top:918px;width:1602px;height:109px;border:5px solid #ff0000;border-bottom-width:4px"></div>
<div class="a" style="left:384px;top:24px;width:236px;height:832px;background:#f0f0f0;border:1px solid #c6c6c6;box-shadow:2px 2px 3px rgba(0,0,0,.55);color:#000;font-size:16.2px"><div class="t" style="left:25px;top:5px;line-height:20px;color:#000">Arrange</div><svg style="left:218px;top:7px" width="6" height="9"><path d="M0 0 L5.5 4.5 L0 9 Z" fill="#000"/></svg><div class="t" style="left:25px;top:30px;line-height:20px;color:#000">Workspace</div><svg style="left:218px;top:32px" width="6" height="9"><path d="M0 0 L5.5 4.5 L0 9 Z" fill="#000"/></svg><div class="a" style="left:3px;top:56px;width:228px;height:1px;background:#a6a6a6"></div><div class="t" style="left:25px;top:68px;line-height:20px;color:#000">Extensions</div><svg style="left:218px;top:70px" width="6" height="9"><path d="M0 0 L5.5 4.5 L0 9 Z" fill="#000"/></svg><div class="a" style="left:3px;top:94px;width:228px;height:1px;background:#a6a6a6"></div><div class="t" style="left:25px;top:105px;line-height:20px;color:#000">Actions</div><div class="t" style="right:18px;top:105px;line-height:20px;color:#000">Alt+F9</div><div class="t" style="left:25px;top:130px;line-height:20px;color:#000">Adjustments</div><svg style="left:5px;top:135px" width="12" height="11"><path d="M1 5.5 L4.3 9 L10.8 1.5" fill="none" stroke="#000" stroke-width="2.4"/></svg><div class="t" style="left:25px;top:155px;line-height:20px;color:#000">Brush</div><div class="t" style="right:18px;top:155px;line-height:20px;color:#000">F5</div><div class="t" style="left:25px;top:180px;line-height:20px;color:#000">Brush Presets</div><div class="t" style="left:25px;top:205px;line-height:20px;color:#000">Channels</div><div class="t" style="left:25px;top:230px;line-height:20px;color:#000">Character</div><div class="t" style="left:25px;top:255px;line-height:20px;color:#000">Character Styles</div><div class="t" style="left:25px;top:280px;line-height:20px;color:#000">Clone Source</div><div class="t" style="left:25px;top:305px;line-height:20px;color:#000">Color</div><div class="t" style="right:18px;top:305px;line-height:20px;color:#000">F6</div><svg style="left:5px;top:310px" width="12" height="11"><path d="M1 5.5 L4.3 9 L10.8 1.5" fill="none" stroke="#000" stroke-width="2.4"/></svg><div class="t" style="left:25px;top:330px;line-height:20px;color:#000">Histogram</div><div class="t" style="left:25px;top:355px;line-height:20px;color:#000">History</div><svg style="left:5px;top:360px" width="12" height="11"><path d="M1 5.5 L4.3 9 L10.8 1.5" fill="none" stroke="#000" stroke-width="2.4"/></svg><div class="t" style="left:25px;top:380px;line-height:20px;color:#000">Info</div><div class="t" style="right:18px;top:380px;line-height:20px;color:#000">F8</div><div class="t" style="left:25px;top:405px;line-height:20px;color:#000">Layer Comps</div><div class="t" style="left:25px;top:430px;line-height:20px;color:#000">Layers</div><div class="t" style="right:18px;top:430px;line-height:20px;color:#000">F7</div><svg style="left:5px;top:435px" width="12" height="11"><path d="M1 5.5 L4.3 9 L10.8 1.5" fill="none" stroke="#000" stroke-width="2.4"/></svg><div class="t" style="left:25px;top:455px;line-height:20px;color:#000">Navigator</div><div class="t" style="left:25px;top:480px;line-height:20px;color:#000">Notes</div><div class="t" style="left:25px;top:505px;line-height:20px;color:#000">Paragraph</div><div class="t" style="left:25px;top:530px;line-height:20px;color:#000">Paragraph Styles</div><div class="t" style="left:25px;top:555px;line-height:20px;color:#000">Paths</div><div class="t" style="left:25px;top:580px;line-height:20px;color:#000">Properties</div><div class="t" style="left:25px;top:605px;line-height:20px;color:#000">Styles</div><div class="t" style="left:25px;top:630px;line-height:20px;color:#000">Swatches</div><div class="a" style="left:2px;top:653px;width:230px;height:24px;background:#0078d7"></div><div class="t" style="left:25px;top:655px;line-height:20px;color:#fff">Timeline</div><svg style="left:5px;top:660px" width="12" height="11"><path d="M1 5.5 L4.3 9 L10.8 1.5" fill="none" stroke="#fff" stroke-width="2.4"/></svg><div class="t" style="left:25px;top:680px;line-height:20px;color:#000">Tool Presets</div><div class="a" style="left:3px;top:708px;width:228px;height:1px;background:#a6a6a6"></div><div class="t" style="left:25px;top:718px;line-height:20px;color:#000">Options</div><svg style="left:5px;top:723px" width="12" height="11"><path d="M1 5.5 L4.3 9 L10.8 1.5" fill="none" stroke="#000" stroke-width="2.4"/></svg><div class="t" style="left:25px;top:743px;line-height:20px;color:#000">Tools</div><svg style="left:5px;top:748px" width="12" height="11"><path d="M1 5.5 L4.3 9 L10.8 1.5" fill="none" stroke="#000" stroke-width="2.4"/></svg><div class="a" style="left:3px;top:770px;width:228px;height:1px;background:#a6a6a6"></div><div class="t" style="left:25px;top:781px;line-height:20px;color:#000">1 201709a-1000-1.gif</div><svg style="left:5px;top:786px" width="12" height="11"><path d="M1 5.5 L4.3 9 L10.8 1.5" fill="none" stroke="#000" stroke-width="2.4"/></svg><div class="t" style="left:25px;top:806px;line-height:20px;color:#000">2 gif.psd</div></div><div class="a" style="left:376px;top:673px;width:246px;height:36px;border:5px solid #ff0000;border-radius:3px"></div>

</body></html>
